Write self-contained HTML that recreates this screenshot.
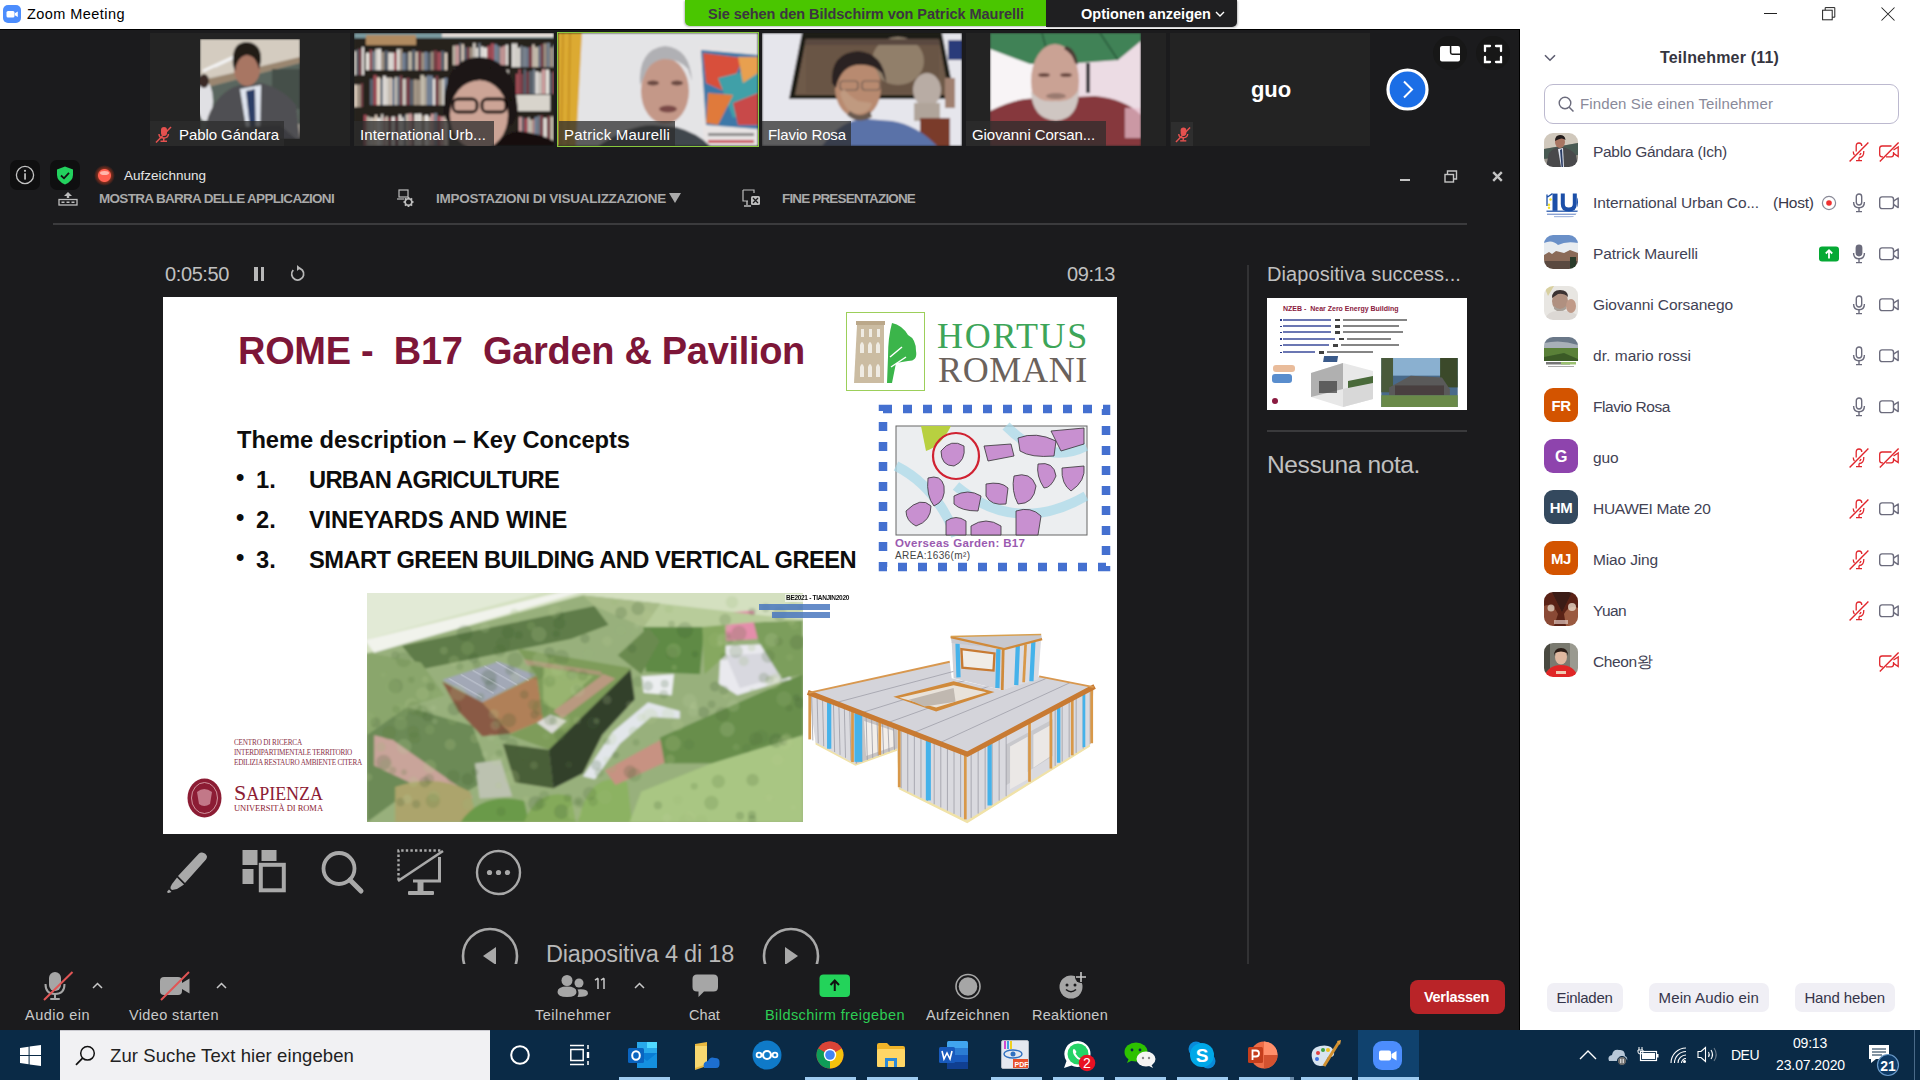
<!DOCTYPE html>
<html><head><meta charset="utf-8">
<style>
*{margin:0;padding:0;box-sizing:border-box}
html,body{width:1920px;height:1080px;overflow:hidden;background:#fff;font-family:"Liberation Sans",sans-serif;position:relative}
.a{position:absolute}
.t{position:absolute;white-space:nowrap;line-height:1}
svg{position:absolute;overflow:visible}
.lbl{position:absolute;height:25px;background:rgba(44,44,44,.74)}
.lt{position:absolute;white-space:nowrap;line-height:1;font-size:15px;color:#fff}
.pn{position:absolute;white-space:nowrap;line-height:1;font-size:15.5px;color:#424254}
.tb{position:absolute;white-space:nowrap;line-height:1;font-size:14.5px;color:#c9c9c9;text-align:center}
</style></head><body>
<!-- ============ TITLE BAR ============ -->
<div class="a" style="left:0;top:0;width:1920px;height:29px;background:#fff"></div>
<svg style="left:3px;top:5px" width="18" height="18" viewBox="0 0 18 18"><rect x="0" y="0" width="18" height="18" rx="5" fill="#4c8dfd"></rect><rect x="3.5" y="6" width="8" height="6.5" rx="1.5" fill="#fff"></rect><path d="M11.8 8.2 L14.8 6.4 V12.1 L11.8 10.3Z" fill="#fff"></path></svg>
<div class="t" style="left: 27px; top: 7px; font-size: 14.5px; color: rgb(0, 0, 0); letter-spacing: 0.443px;">Zoom Meeting</div>
<svg style="left:1764px;top:13px" width="14" height="2"><rect width="13" height="1" fill="#222"></rect></svg>
<svg style="left:1822px;top:7px" width="14" height="14" viewBox="0 0 14 14"><rect x="0.6" y="3.2" width="9.6" height="9.6" fill="none" stroke="#222" stroke-width="1"></rect><path d="M3.2 3.2 V0.6 H12.8 V10.2 H10.2" fill="none" stroke="#222" stroke-width="1"></path></svg>
<svg style="left:1881px;top:7px" width="14" height="14" viewBox="0 0 14 14"><path d="M0.5 0.5 L13.5 13.5 M13.5 0.5 L0.5 13.5" stroke="#222" stroke-width="1.05"></path></svg>

<!-- ============ DARK MEETING AREA ============ -->
<div class="a" style="left:0;top:29px;width:1520px;height:1001px;background:#1b1b1d"></div>
<div class="a" style="left:0;top:29px;width:1520px;height:1px;background:#000"></div>
<div class="a" style="left:1519px;top:29px;width:1px;height:1001px;background:#000"></div>
<!-- right panel -->
<div class="a" style="left:1520px;top:29px;width:400px;height:1001px;background:#fff"></div>

<!-- ============ BANNER ============ -->
<div class="a" style="left:685px;top:0;width:362px;height:26px;background:#4ac600;border-radius:0 0 0 5px;box-shadow:-1px 1px 2px rgba(0,0,0,.25)"></div>
<div class="t" style="left: 708px; top: 7px; font-size: 14.5px; font-weight: bold; color: rgb(60, 53, 65); letter-spacing: -0.033px;">Sie sehen den Bildschirm von Patrick Maurelli</div>
<div class="a" style="left:1046px;top:0;width:191px;height:27px;background:#1f1f21;border-radius:0 0 5px 0;box-shadow:1px 1px 2px rgba(0,0,0,.25)"></div>
<div class="t" style="left: 1081px; top: 7px; font-size: 14.5px; font-weight: bold; color: rgb(255, 255, 255); letter-spacing: 0.017px;">Optionen anzeigen</div>
<svg style="left:1215px;top:11px" width="10" height="6" viewBox="0 0 10 6"><path d="M1 1 L5 5 L9 1" fill="none" stroke="#fff" stroke-width="1.4"></path></svg>

<!-- ============ THUMBNAILS ============ -->
<!-- Pablo -->
<div class="a" style="left:150px;top:33px;width:200px;height:113px;background:#232323"></div>
<svg style="left:200px;top:39px" width="100" height="100" viewBox="0 0 100 100">
<defs><filter id="bl1" x="-10%" y="-10%" width="120%" height="120%"><feGaussianBlur stdDeviation="1.2"></feGaussianBlur></filter><clipPath id="c1"><rect width="100" height="100"></rect></clipPath></defs>
<g clip-path="url(#c1)" filter="url(#bl1)">
<rect width="100" height="100" fill="#c4bcb0"></rect>
<path d="M0 0 H100 V22 L0 40Z" fill="#d4ccc0"></path>
<path d="M3 32 L38 16" stroke="#f4f4f4" stroke-width="3"></path><path d="M15 28 L45 14" stroke="#eee" stroke-width="1.5"></path>
<path d="M0 42 L100 18 V24 L0 50Z" fill="#9a8670"></path>
<path d="M0 50 L100 24 V85 L0 95Z" fill="#5a665e"></path>
<rect x="72" y="30" width="28" height="40" fill="#44504a"></rect>
<ellipse cx="5" cy="62" rx="8" ry="20" fill="#e0e0e4"></ellipse><ellipse cx="4" cy="42" rx="5" ry="7" fill="#3a2c26"></ellipse>
<path d="M4 100 L8 78 Q18 52 40 46 L62 44 Q84 50 96 66 L100 100Z" fill="#505052"></path>
<path d="M40 50 L48 100 L60 100 L61 46Z" fill="#dfe4ee"></path>
<path d="M46 52 L51 100 L56 100 L55 50Z" fill="#2c3d66"></path>
<ellipse cx="47" cy="30" rx="13" ry="17" fill="#a87664"></ellipse>
<path d="M33 26 Q31 3 47 3 Q62 4 61 22 L59 30 Q56 16 46 16 Q37 18 35 32Z" fill="#221a18"></path>
<path d="M20 100 L35 88 L80 86 L96 100Z" fill="#3e3e42"></path>
</g></svg>
<div class="lbl" style="left:150px;top:121px;width:134px"></div>
<svg style="left:155px;top:126px" width="17" height="17" viewBox="0 0 17 17"><rect x="6" y="1" width="6" height="9" rx="3" fill="#e5514f"></rect><path d="M4 8 Q4 12 9 12 Q13 12 13.5 8" fill="none" stroke="#e5514f" stroke-width="1.5"></path><rect x="8" y="12" width="1.5" height="3" fill="#e5514f"></rect><rect x="5.5" y="14.5" width="6.5" height="1.5" fill="#e5514f"></rect><path d="M1 16.5 L16 1" stroke="#e5514f" stroke-width="1.5"></path></svg>
<div class="lt" style="left: 179px; top: 127px; letter-spacing: -0.07px;">Pablo Gándara</div>

<!-- International -->
<svg style="left:354px;top:33px" width="200" height="113" viewBox="0 0 200 113"><defs><filter id="bl2" x="-5%" y="-5%" width="110%" height="110%"><feGaussianBlur stdDeviation="0.9"></feGaussianBlur></filter><clipPath id="c2"><rect width="200" height="113"></rect></clipPath></defs><g clip-path="url(#c2)" filter="url(#bl2)"><rect width="200" height="113" fill="#26201d"></rect><rect x="0" y="0" width="200" height="5" fill="#7a9aa0"></rect><rect x="88" y="0" width="112" height="4" fill="#e8e0dc"></rect><rect x="12" y="2" width="50" height="10" fill="#b08a60"></rect><rect x="0.0" y="18.2" width="2.0" height="23.8" fill="#d8d2ca"></rect><rect x="2.3" y="16.5" width="2.3" height="25.5" fill="#5a6470"></rect><rect x="4.9" y="15.9" width="2.7" height="26.1" fill="#7a4048"></rect><rect x="7.9" y="14.1" width="2.0" height="27.9" fill="#f0ece8"></rect><rect x="12.0" y="19.7" width="3.5" height="17.3" fill="#e8e4de"></rect><rect x="15.8" y="16.8" width="2.0" height="20.2" fill="#a8505a"></rect><rect x="18.1" y="18.3" width="3.1" height="18.7" fill="#7a8490"></rect><rect x="21.5" y="16.1" width="2.3" height="20.9" fill="#e8e4de"></rect><rect x="24.1" y="15.8" width="2.8" height="21.2" fill="#f0ece8"></rect><rect x="27.2" y="19.0" width="2.9" height="18.0" fill="#a89a8a"></rect><rect x="30.5" y="17.7" width="3.5" height="19.3" fill="#5a6470"></rect><rect x="34.3" y="19.5" width="2.7" height="17.5" fill="#e8e4de"></rect><rect x="37.3" y="19.7" width="2.5" height="17.3" fill="#f0ece8"></rect><rect x="40.0" y="19.4" width="2.6" height="17.6" fill="#a8505a"></rect><rect x="42.9" y="16.2" width="2.8" height="20.8" fill="#e8e4de"></rect><rect x="46.0" y="15.9" width="2.1" height="21.1" fill="#a89a8a"></rect><rect x="48.4" y="20.0" width="2.7" height="17.0" fill="#7a8aa0"></rect><rect x="51.4" y="20.0" width="2.8" height="17.0" fill="#5a6470"></rect><rect x="54.5" y="18.7" width="3.2" height="18.3" fill="#c8c0b0"></rect><rect x="58.1" y="16.8" width="3.2" height="20.2" fill="#5a6470"></rect><rect x="61.6" y="18.8" width="2.1" height="18.2" fill="#e8d8c8"></rect><rect x="64.0" y="18.3" width="3.1" height="18.7" fill="#7a4048"></rect><rect x="67.4" y="19.6" width="2.7" height="17.4" fill="#a89a8a"></rect><rect x="70.4" y="19.0" width="2.7" height="18.0" fill="#7a8aa0"></rect><rect x="73.4" y="19.5" width="3.4" height="17.5" fill="#5a6470"></rect><rect x="77.1" y="18.6" width="2.4" height="18.4" fill="#a89a8a"></rect><rect x="79.8" y="17.4" width="3.1" height="19.6" fill="#7a4048"></rect><rect x="83.3" y="19.1" width="3.5" height="17.9" fill="#a8505a"></rect><rect x="87.0" y="18.1" width="3.4" height="18.9" fill="#5a6470"></rect><rect x="90.7" y="19.8" width="2.4" height="17.2" fill="#e8d8c8"></rect><rect x="99.0" y="12.7" width="2.2" height="19.3" fill="#c8c0b0"></rect><rect x="101.5" y="12.4" width="3.4" height="19.6" fill="#d0a0a0"></rect><rect x="105.3" y="10.1" width="1.9" height="21.9" fill="#5a6470"></rect><rect x="107.5" y="11.2" width="2.3" height="20.8" fill="#e8d8c8"></rect><rect x="110.1" y="14.2" width="2.6" height="17.8" fill="#5a6470"></rect><rect x="113.0" y="14.3" width="2.5" height="17.7" fill="#7a4048"></rect><rect x="115.8" y="14.3" width="2.9" height="17.7" fill="#a89a8a"></rect><rect x="119.1" y="10.1" width="2.5" height="21.9" fill="#d8d2ca"></rect><rect x="121.9" y="14.8" width="2.1" height="17.2" fill="#e8e4de"></rect><rect x="124.3" y="10.2" width="2.3" height="21.8" fill="#7a8490"></rect><rect x="126.9" y="13.6" width="2.7" height="18.4" fill="#f0ece8"></rect><rect x="129.8" y="14.6" width="3.1" height="17.4" fill="#f0ece8"></rect><rect x="133.2" y="12.9" width="3.1" height="19.1" fill="#a8505a"></rect><rect x="136.6" y="10.5" width="3.4" height="21.5" fill="#a8505a"></rect><rect x="140.3" y="11.3" width="2.7" height="20.7" fill="#7a8aa0"></rect><rect x="143.3" y="13.1" width="2.6" height="18.9" fill="#7a8490"></rect><rect x="146.2" y="14.2" width="2.6" height="17.8" fill="#d0a0a0"></rect><rect x="149.1" y="12.9" width="2.4" height="19.1" fill="#d0a0a0"></rect><rect x="151.8" y="11.7" width="2.2" height="20.3" fill="#e8e4de"></rect><rect x="158.0" y="10.5" width="2.2" height="23.5" fill="#f0ece8"></rect><rect x="160.5" y="10.5" width="2.7" height="23.5" fill="#e8e4de"></rect><rect x="163.5" y="14.6" width="2.5" height="19.4" fill="#e8e4de"></rect><rect x="166.3" y="12.7" width="2.2" height="21.3" fill="#7a8490"></rect><rect x="168.8" y="14.1" width="3.2" height="19.9" fill="#7a8490"></rect><rect x="172.3" y="14.6" width="2.2" height="19.4" fill="#7a8aa0"></rect><rect x="174.8" y="14.0" width="3.3" height="20.0" fill="#7a4048"></rect><rect x="178.4" y="11.4" width="2.1" height="22.6" fill="#e8d8c8"></rect><rect x="180.7" y="14.2" width="3.5" height="19.8" fill="#c8c0b0"></rect><rect x="184.6" y="13.0" width="2.0" height="21.0" fill="#7a8aa0"></rect><rect x="186.8" y="11.2" width="2.5" height="22.8" fill="#7a4048"></rect><rect x="189.6" y="10.4" width="2.7" height="23.6" fill="#a89a8a"></rect><rect x="192.6" y="10.0" width="3.3" height="24.0" fill="#7a8490"></rect><rect x="196.2" y="14.4" width="2.8" height="19.6" fill="#a89a8a"></rect><rect x="199.3" y="12.1" width="2.2" height="21.9" fill="#7a8490"></rect><rect x="0.0" y="51.7" width="2.9" height="22.3" fill="#e8d8c8"></rect><rect x="3.2" y="51.7" width="3.5" height="22.3" fill="#a89a8a"></rect><rect x="7.0" y="50.3" width="1.9" height="23.7" fill="#7a4048"></rect><rect x="16.0" y="46.1" width="3.2" height="25.9" fill="#5a6470"></rect><rect x="19.5" y="42.2" width="3.2" height="29.8" fill="#a8505a"></rect><rect x="23.0" y="44.4" width="3.0" height="27.6" fill="#e8d8c8"></rect><rect x="26.3" y="45.9" width="2.5" height="26.1" fill="#7a8490"></rect><rect x="29.1" y="43.0" width="2.7" height="29.0" fill="#f0ece8"></rect><rect x="32.0" y="44.7" width="3.4" height="27.3" fill="#d8d2ca"></rect><rect x="35.8" y="44.8" width="2.1" height="27.2" fill="#e8d8c8"></rect><rect x="38.2" y="46.0" width="2.3" height="26.0" fill="#7a8aa0"></rect><rect x="40.8" y="44.1" width="2.0" height="27.9" fill="#d8d2ca"></rect><rect x="43.1" y="44.0" width="2.5" height="28.0" fill="#7a8490"></rect><rect x="45.8" y="42.5" width="2.6" height="29.5" fill="#7a4048"></rect><rect x="48.7" y="46.0" width="3.1" height="26.0" fill="#d8d2ca"></rect><rect x="52.1" y="44.9" width="3.5" height="27.1" fill="#7a4048"></rect><rect x="55.9" y="46.6" width="3.3" height="25.4" fill="#5a6470"></rect><rect x="59.5" y="46.5" width="3.5" height="25.5" fill="#a89a8a"></rect><rect x="63.3" y="46.9" width="2.8" height="25.1" fill="#a89a8a"></rect><rect x="66.4" y="42.1" width="3.6" height="29.9" fill="#c8c0b0"></rect><rect x="70.3" y="44.1" width="2.2" height="27.9" fill="#c8c0b0"></rect><rect x="72.8" y="42.4" width="2.9" height="29.6" fill="#7a8aa0"></rect><rect x="76.0" y="42.6" width="2.7" height="29.4" fill="#7a8aa0"></rect><rect x="79.0" y="45.6" width="2.3" height="26.4" fill="#f0ece8"></rect><rect x="81.6" y="42.7" width="2.7" height="29.3" fill="#7a4048"></rect><rect x="84.6" y="46.4" width="3.3" height="25.6" fill="#a89a8a"></rect><rect x="88.2" y="45.9" width="1.8" height="26.1" fill="#e8e4de"></rect><rect x="90.3" y="44.8" width="3.0" height="27.2" fill="#7a8aa0"></rect><rect x="100.0" y="34.8" width="2.4" height="19.2" fill="#7a8aa0"></rect><rect x="102.7" y="38.1" width="1.9" height="15.9" fill="#d8d2ca"></rect><rect x="104.9" y="34.3" width="2.5" height="19.7" fill="#a89a8a"></rect><rect x="107.6" y="34.4" width="2.2" height="19.6" fill="#f0ece8"></rect><rect x="110.1" y="34.5" width="1.9" height="19.5" fill="#f0ece8"></rect><rect x="112.3" y="36.8" width="1.9" height="17.2" fill="#7a4048"></rect><rect x="114.5" y="36.9" width="2.9" height="17.1" fill="#e8e4de"></rect><rect x="117.8" y="36.0" width="2.8" height="18.0" fill="#7a4048"></rect><rect x="120.9" y="38.3" width="1.9" height="15.7" fill="#7a8490"></rect><rect x="123.1" y="36.7" width="2.6" height="17.3" fill="#d0a0a0"></rect><rect x="126.0" y="38.1" width="2.4" height="15.9" fill="#a8505a"></rect><rect x="128.6" y="36.9" width="2.0" height="17.1" fill="#7a4048"></rect><rect x="130.9" y="36.7" width="2.5" height="17.3" fill="#d8d2ca"></rect><rect x="133.7" y="37.1" width="2.8" height="16.9" fill="#5a6470"></rect><rect x="136.8" y="36.1" width="3.0" height="17.9" fill="#c8c0b0"></rect><rect x="140.1" y="38.6" width="2.6" height="15.4" fill="#c8c0b0"></rect><rect x="143.0" y="38.0" width="2.3" height="16.0" fill="#e8d8c8"></rect><rect x="145.7" y="34.4" width="3.2" height="19.6" fill="#7a8490"></rect><rect x="149.2" y="38.4" width="2.7" height="15.6" fill="#e8d8c8"></rect><rect x="152.2" y="37.0" width="2.6" height="17.0" fill="#d8d2ca"></rect><rect x="162.0" y="40.8" width="2.2" height="20.2" fill="#a8505a"></rect><rect x="164.5" y="36.2" width="2.1" height="24.8" fill="#a8505a"></rect><rect x="167.0" y="41.0" width="2.2" height="20.0" fill="#7a4048"></rect><rect x="169.5" y="36.2" width="2.5" height="24.8" fill="#5a6470"></rect><rect x="172.3" y="38.5" width="2.6" height="22.5" fill="#7a4048"></rect><rect x="175.2" y="38.0" width="3.4" height="23.0" fill="#5a6470"></rect><rect x="179.0" y="36.1" width="2.2" height="24.9" fill="#7a8490"></rect><rect x="181.5" y="38.4" width="2.7" height="22.6" fill="#f0ece8"></rect><rect x="184.5" y="39.3" width="3.1" height="21.7" fill="#d8d2ca"></rect><rect x="187.9" y="36.3" width="3.6" height="24.7" fill="#d0a0a0"></rect><rect x="191.8" y="36.5" width="3.3" height="24.5" fill="#e8e4de"></rect><rect x="195.4" y="39.5" width="2.4" height="21.5" fill="#5a6470"></rect><rect x="198.1" y="38.6" width="3.4" height="22.4" fill="#7a4048"></rect><rect x="162" y="62" width="34" height="16" fill="#d8d4cc"></rect><rect x="10.0" y="81.9" width="2.6" height="31.1" fill="#a8505a"></rect><rect x="12.9" y="83.4" width="2.1" height="29.6" fill="#c8c0b0"></rect><rect x="15.4" y="84.5" width="2.7" height="28.5" fill="#d8d2ca"></rect><rect x="18.4" y="84.7" width="2.4" height="28.3" fill="#e8d8c8"></rect><rect x="21.1" y="81.9" width="1.9" height="31.1" fill="#e8d8c8"></rect><rect x="23.2" y="84.8" width="3.5" height="28.2" fill="#f0ece8"></rect><rect x="27.1" y="81.2" width="2.1" height="31.8" fill="#d8d2ca"></rect><rect x="29.4" y="84.4" width="2.0" height="28.6" fill="#d0a0a0"></rect><rect x="31.8" y="83.4" width="1.9" height="29.6" fill="#e8d8c8"></rect><rect x="34.0" y="84.6" width="3.4" height="28.4" fill="#7a4048"></rect><rect x="37.7" y="83.6" width="3.0" height="29.4" fill="#f0ece8"></rect><rect x="41.0" y="83.9" width="3.4" height="29.1" fill="#7a4048"></rect><rect x="44.7" y="81.7" width="2.5" height="31.3" fill="#e8e4de"></rect><rect x="47.5" y="84.4" width="2.2" height="28.6" fill="#f0ece8"></rect><rect x="50.0" y="81.9" width="1.9" height="31.1" fill="#5a6470"></rect><rect x="52.2" y="81.2" width="2.1" height="31.8" fill="#e8d8c8"></rect><rect x="54.5" y="80.6" width="3.4" height="32.4" fill="#d0a0a0"></rect><rect x="58.3" y="83.8" width="1.8" height="29.2" fill="#7a4048"></rect><rect x="60.4" y="81.0" width="3.4" height="32.0" fill="#e8e4de"></rect><rect x="64.1" y="80.7" width="3.4" height="32.3" fill="#e8e4de"></rect><rect x="67.8" y="82.9" width="2.7" height="30.1" fill="#a89a8a"></rect><rect x="70.8" y="82.1" width="3.5" height="30.9" fill="#f0ece8"></rect><rect x="74.5" y="83.8" width="2.1" height="29.2" fill="#e8d8c8"></rect><rect x="77.0" y="80.9" width="2.8" height="32.1" fill="#d0a0a0"></rect><rect x="80.1" y="80.2" width="3.1" height="32.8" fill="#7a8490"></rect><rect x="83.5" y="83.0" width="2.8" height="30.0" fill="#a8505a"></rect><rect x="86.6" y="83.7" width="3.1" height="29.3" fill="#d0a0a0"></rect><rect x="90.1" y="80.6" width="3.6" height="32.4" fill="#e8d8c8"></rect><rect x="165.0" y="84.1" width="2.8" height="28.9" fill="#d0a0a0"></rect><rect x="168.1" y="84.3" width="1.8" height="28.7" fill="#5a6470"></rect><rect x="170.3" y="85.3" width="3.3" height="27.7" fill="#a8505a"></rect><rect x="173.8" y="84.5" width="1.9" height="28.5" fill="#d8d2ca"></rect><rect x="176.0" y="86.8" width="2.2" height="26.2" fill="#c8c0b0"></rect><rect x="178.5" y="86.3" width="1.9" height="26.7" fill="#d0a0a0"></rect><rect x="180.7" y="84.1" width="2.4" height="28.9" fill="#7a8aa0"></rect><rect x="183.5" y="82.9" width="2.3" height="30.1" fill="#7a8490"></rect><rect x="186.0" y="82.7" width="3.0" height="30.3" fill="#7a4048"></rect><rect x="189.3" y="85.1" width="3.5" height="27.9" fill="#e8e4de"></rect><rect x="193.2" y="83.2" width="2.8" height="29.8" fill="#7a4048"></rect><rect x="196.3" y="83.5" width="3.5" height="29.5" fill="#c8c0b0"></rect><path d="M90 82 Q88 25 125 24 Q162 25 164 80 L158 92 L94 92Z" fill="#1a1412"></path><ellipse cx="125" cy="82" rx="29" ry="35" fill="#cca496"></ellipse><path d="M94 70 Q96 34 125 33 Q156 34 158 70 Q148 48 126 47 Q104 49 94 70Z" fill="#1a1412"></path><rect x="99" y="66" width="24" height="13" rx="5" fill="none" stroke="#140c0c" stroke-width="2.8"></rect><rect x="128" y="66" width="24" height="13" rx="5" fill="none" stroke="#140c0c" stroke-width="2.8"></rect><path d="M140 113 Q150 100 165 98 Q185 100 200 108 V113Z" fill="#141010"></path></g></svg>
<div class="lbl" style="left:354px;top:121px;width:140px"></div>
<div class="lt" style="left: 360px; top: 127px; letter-spacing: 0.13px;">International Urb...</div>

<!-- Patrick -->
<svg style="left:558px;top:33px" width="200" height="113" viewBox="0 0 200 113">
<defs><filter id="bl3" x="-5%" y="-5%" width="110%" height="110%"><feGaussianBlur stdDeviation="1"></feGaussianBlur></filter><clipPath id="c3"><rect width="200" height="113"></rect></clipPath></defs>
<g clip-path="url(#c3)" filter="url(#bl3)">
<rect width="200" height="113" fill="#e4e4e6"></rect>
<path d="M0 0 H24 L18 113 H0Z" fill="#dcaa30"></path>
<path d="M5 0 L3 113 M12 0 L10 113" stroke="#c08a20" stroke-width="1.5"></path>
<path d="M141 14 L200 20 V113 H146Z" fill="#e8e4e4"></path>
<path d="M143 17 L200 22 V96 L148 92Z" fill="#3c78a8"></path>
<path d="M145 20 L185 25 L170 60 L148 50Z" fill="#d8503a"></path>
<path d="M160 45 L200 35 V75 L175 85Z" fill="#40a0a8"></path>
<path d="M150 60 L175 62 L160 92 L148 90Z" fill="#e07a3a"></path>
<path d="M180 24 L200 24 V40 L185 50Z" fill="#e8a050"></path>
<path d="M175 70 L200 60 V92 L180 92Z" fill="#c84a48"></path>
<rect x="150" y="100" width="46" height="3" fill="#888"></rect>
<rect x="150" y="107" width="46" height="3" fill="#c84050"></rect>
<path d="M40 113 Q70 92 95 92 L118 94 Q140 100 152 113Z" fill="#40464e"></path>
<ellipse cx="107" cy="58" rx="24" ry="33" fill="#c49888"></ellipse>
<path d="M82 52 Q80 16 107 13 Q132 15 134 48 L130 36 Q120 25 105 26 Q90 29 86 44Z" fill="#b0b0b4"></path>
<ellipse cx="95" cy="50" rx="6" ry="2.5" fill="#6a4a42"></ellipse><ellipse cx="119" cy="50" rx="6" ry="2.5" fill="#6a4a42"></ellipse>
<ellipse cx="110" cy="76" rx="9" ry="3.5" fill="#7a4a46"></ellipse>
</g></svg>
<div class="a" style="left:557px;top:32px;width:202px;height:115px;border:1.5px solid #88c93e"></div>
<div class="lbl" style="left:559px;top:121px;width:116px"></div>
<div class="lt" style="left: 564px; top: 127px; letter-spacing: 0.217px;">Patrick Maurelli</div>

<!-- Flavio -->
<svg style="left:762px;top:33px" width="200" height="113" viewBox="0 0 200 113">
<defs><filter id="bl4" x="-5%" y="-5%" width="110%" height="110%"><feGaussianBlur stdDeviation="1"></feGaussianBlur></filter><clipPath id="c4"><rect width="200" height="113"></rect></clipPath></defs>
<g clip-path="url(#c4)" filter="url(#bl4)">
<rect width="200" height="113" fill="#e6e6ec"></rect>
<path d="M40 0 H180 L193 66 H27Z" fill="#1e1a18"></path>
<path d="M44 6 H177 L187 62 H33Z" fill="#6e5a4a"></path>
<ellipse cx="136" cy="28" rx="26" ry="24" fill="#b0a088" opacity=".8"></ellipse><rect x="44" y="10" width="133" height="50" fill="#5a4636" opacity=".25"></rect>
<path d="M44 6 H177 L178 12 H43Z" fill="#5a4a40"></path>
<rect x="186" y="7" width="14" height="20" fill="#2a3a7a"></rect>
<rect x="183" y="45" width="10" height="30" fill="#a08070"></rect>
<ellipse cx="165" cy="57" rx="14" ry="17" fill="#b8aca4"></ellipse>
<rect x="152" y="70" width="26" height="18" fill="#b0a49a"></rect>
<rect x="158" y="85" width="30" height="28" fill="#7a3a2a"></rect>
<path d="M60 113 Q80 85 105 86 L130 88 Q155 92 175 113Z" fill="#5a72a8"></path>
<ellipse cx="96" cy="55" rx="23" ry="30" fill="#b88a70"></ellipse>
<path d="M70 50 Q68 20 96 18 Q122 20 124 50 L120 40 Q110 30 94 32 Q78 35 74 55Z" fill="#2a2220"></path>
<rect x="78" y="48" width="18" height="9" rx="3" fill="none" stroke="#6a5a50" stroke-width="1.2"></rect>
<rect x="100" y="48" width="18" height="9" rx="3" fill="none" stroke="#6a5a50" stroke-width="1.2"></rect>
<path d="M78 60 Q85 85 100 80 Q108 78 110 70 L96 68 Q86 62 82 56Z" fill="#c09a80"></path>
<path d="M85 82 Q96 92 110 84 L108 78 Q98 86 88 78Z" fill="#6a5a50"></path>
</g></svg>
<div class="lbl" style="left:762px;top:121px;width:89px"></div>
<div class="lt" style="left: 768px; top: 127px; letter-spacing: -0.109px;">Flavio Rosa</div>

<!-- Giovanni -->
<div class="a" style="left:966px;top:33px;width:200px;height:113px;background:#232323"></div>
<svg style="left:990px;top:33px" width="151" height="113" viewBox="0 0 151 113">
<defs><filter id="bl5" x="-5%" y="-5%" width="110%" height="110%"><feGaussianBlur stdDeviation="1"></feGaussianBlur></filter><clipPath id="c5"><rect width="151" height="113"></rect></clipPath></defs>
<g clip-path="url(#c5)" filter="url(#bl5)">
<rect width="151" height="113" fill="#ecdce4"></rect>
<rect x="0" y="15" width="60" height="70" fill="#f8f4f6"></rect>
<path d="M0 0 H151 V8 L128 27 L75 31 L40 31 L0 16Z" fill="#3f8256"></path>
<path d="M52 0 L60 30" stroke="#2a5a3a" stroke-width="1.5"></path><path d="M110 0 L128 27" stroke="#2a5a3a" stroke-width="1.5"></path>
<rect x="96" y="30" width="4" height="30" fill="#2a2a30"></rect>
<path d="M0 113 V78 Q30 63 50 66 L105 63 Q135 66 151 82 V113Z" fill="#86393c"></path>
<ellipse cx="65" cy="48" rx="24" ry="37" fill="#caa294"></ellipse>
<path d="M76 13 Q86 16 88 32 L85 30 Q82 20 74 16Z" fill="#4a3a34"></path>
<path d="M41 58 Q42 86 66 88 Q89 86 89 56 Q82 70 66 68 Q49 70 41 58Z" fill="#cfc6c2"></path><ellipse cx="66" cy="63" rx="10" ry="3" fill="#9a7a70"></ellipse>
<ellipse cx="54" cy="42" rx="6" ry="2" fill="#6a4a40"></ellipse><ellipse cx="76" cy="42" rx="6" ry="2" fill="#6a4a40"></ellipse>
<rect x="135" y="75" width="16" height="30" fill="#e8c0d0" opacity=".7"></rect>
</g></svg>
<div class="lbl" style="left:966px;top:121px;width:140px"></div>
<div class="lt" style="left: 972px; top: 127px; letter-spacing: -0.069px;">Giovanni Corsan...</div>

<!-- guo -->
<div class="a" style="left:1170px;top:33px;width:200px;height:113px;background:#232323"></div>
<div class="t" style="left: 1251px; top: 79px; font-size: 22px; font-weight: bold; color: rgb(255, 255, 255); letter-spacing: -0.109px;">guo</div>
<div class="a" style="left:1171px;top:122px;width:22px;height:24px;background:#2e2e2e"></div>
<svg style="left:1175px;top:126px" width="16" height="17" viewBox="0 0 17 17"><rect x="6" y="1" width="6" height="9" rx="3" fill="#e5514f"></rect><path d="M4 8 Q4 12 9 12 Q13 12 13.5 8" fill="none" stroke="#e5514f" stroke-width="1.5"></path><rect x="8" y="12" width="1.5" height="3" fill="#e5514f"></rect><rect x="5.5" y="14.5" width="6.5" height="1.5" fill="#e5514f"></rect><path d="M1 16.5 L16 1" stroke="#e5514f" stroke-width="1.5"></path></svg>

<!-- next arrow & view icons -->
<svg style="left:1386px;top:68px" width="43" height="43" viewBox="0 0 43 43"><circle cx="21.5" cy="21.5" r="19.5" fill="#1b6ee6" stroke="#fff" stroke-width="3.2"></circle><path d="M18 13.5 L26 21.5 L18 29.5" fill="none" stroke="#fff" stroke-width="2"></path></svg>
<svg style="left:1430px;top:36px" width="80" height="36" viewBox="0 0 80 36"><circle cx="20" cy="17" r="17" fill="#171717"></circle><circle cx="63" cy="17" r="17" fill="#171717"></circle>
<rect x="10" y="10" width="20" height="15.5" rx="2" fill="#fff"></rect><path d="M20.6 9.5 V16.5 Q20.6 18.2 22.3 18.2 H30.5" fill="none" stroke="#171717" stroke-width="1.5"></path>
<path d="M55 15 V10 H60 M66 10 H71 V15 M71 21 V26 H66 M60 26 H55 V21" fill="none" stroke="#fff" stroke-width="2.3" stroke-linecap="round"></path></svg>

<!-- ============ PRESENTER VIEW ============ -->
<div class="a" style="left:10px;top:160px;width:30px;height:30px;background:#0f0f10;border-radius:7px"></div>
<svg style="left:15px;top:165px" width="20" height="20" viewBox="0 0 20 20"><circle cx="10" cy="10" r="8.6" fill="none" stroke="#c4c4c4" stroke-width="1.3"></circle><rect x="9.2" y="8.3" width="1.7" height="6.3" fill="#c4c4c4"></rect><circle cx="10" cy="5.8" r="1.1" fill="#c4c4c4"></circle></svg>
<div class="a" style="left:50px;top:160px;width:30px;height:30px;background:#0f0f10;border-radius:7px"></div>
<svg style="left:56px;top:166px" width="18" height="19" viewBox="0 0 18 19"><path d="M9 0.5 L17 3.5 V9 Q17 15 9 18.5 Q1 15 1 9 V3.5Z" fill="#23d15e"></path><path d="M5 9.5 L8 12.3 L13 6.8" fill="none" stroke="#111" stroke-width="1.8"></path></svg>
<div class="a" style="left:94px;top:165px;width:21px;height:21px;border-radius:50%;background:radial-gradient(circle,#ff6050 0 6px,rgba(200,60,30,.55) 7px,rgba(120,40,20,0) 10.5px)"></div>
<div class="a" style="left:100px;top:171px;width:9px;height:4px;border-radius:50%;background:rgba(255,220,210,.7)"></div>
<div class="t" style="left: 124px; top: 169px; font-size: 13.5px; color: rgb(230, 230, 230); letter-spacing: 0.016px;">Aufzeichnung</div>

<svg style="left:58px;top:192px" width="20" height="14" viewBox="0 0 20 14"><path d="M10 0 L14 4 H11.2 V6 H8.8 V4 H6Z" fill="#bdbdbd"></path><rect x="1" y="7.5" width="18" height="5.5" fill="none" stroke="#bdbdbd" stroke-width="1.3"></rect><rect x="3.5" y="9.5" width="3" height="1.5" fill="#bdbdbd"></rect><rect x="8.5" y="9.5" width="3" height="1.5" fill="#bdbdbd"></rect><rect x="13.5" y="9.5" width="3" height="1.5" fill="#bdbdbd"></rect></svg>
<div class="t" style="left: 99px; top: 192px; font-size: 13.5px; font-weight: bold; color: rgb(169, 169, 169); letter-spacing: -0.694px;">MOSTRA BARRA DELLE APPLICAZIONI</div>
<svg style="left:396px;top:189px" width="19" height="19" viewBox="0 0 19 19"><rect x="3" y="1" width="9" height="7" fill="none" stroke="#bdbdbd" stroke-width="1.2"></rect><path d="M1 10 H8" stroke="#bdbdbd" stroke-width="1.2"></path><circle cx="12.5" cy="13" r="3.3" fill="none" stroke="#bdbdbd" stroke-width="1.6"></circle><rect x="11.6" y="8" width="1.8" height="2.2" fill="#bdbdbd" transform="rotate(0 12.5 13)"></rect><rect x="11.6" y="8" width="1.8" height="2.2" fill="#bdbdbd" transform="rotate(45 12.5 13)"></rect><rect x="11.6" y="8" width="1.8" height="2.2" fill="#bdbdbd" transform="rotate(90 12.5 13)"></rect><rect x="11.6" y="8" width="1.8" height="2.2" fill="#bdbdbd" transform="rotate(135 12.5 13)"></rect><rect x="11.6" y="8" width="1.8" height="2.2" fill="#bdbdbd" transform="rotate(180 12.5 13)"></rect><rect x="11.6" y="8" width="1.8" height="2.2" fill="#bdbdbd" transform="rotate(225 12.5 13)"></rect><rect x="11.6" y="8" width="1.8" height="2.2" fill="#bdbdbd" transform="rotate(270 12.5 13)"></rect><rect x="11.6" y="8" width="1.8" height="2.2" fill="#bdbdbd" transform="rotate(315 12.5 13)"></rect></svg>
<div class="t" style="left: 436px; top: 192px; font-size: 13.5px; font-weight: bold; color: rgb(169, 169, 169); letter-spacing: -0.266px;">IMPOSTAZIONI DI VISUALIZZAZIONE</div>
<svg style="left:669px;top:193px" width="12" height="10" viewBox="0 0 12 10"><path d="M0 0 H12 L6 10Z" fill="#a9a9a9"></path></svg>
<svg style="left:742px;top:189px" width="19" height="19" viewBox="0 0 19 19"><path d="M1 1 H12 V4 M1 1 V12 H6" fill="none" stroke="#bdbdbd" stroke-width="1.2"></path><path d="M5 12 V16 M2 17 H9" stroke="#bdbdbd" stroke-width="1.4"></path><rect x="9" y="7" width="9" height="9" rx="1.5" fill="#bdbdbd"></rect><path d="M11 9 L16 14 M16 9 L11 14" stroke="#1b1b1d" stroke-width="1.3"></path></svg>
<div class="t" style="left: 782px; top: 192px; font-size: 13.5px; font-weight: bold; color: rgb(169, 169, 169); letter-spacing: -0.848px;">FINE PRESENTAZIONE</div>
<div class="a" style="left:1400px;top:179px;width:10px;height:2px;background:#c4c4c4"></div>
<svg style="left:1444px;top:170px" width="14" height="13" viewBox="0 0 14 13"><rect x="1" y="4.5" width="8.5" height="7.5" fill="none" stroke="#c4c4c4" stroke-width="1.4"></rect><path d="M3.5 4.5 V1 H12.5 V9 H9.5" fill="none" stroke="#c4c4c4" stroke-width="1.4"></path></svg>
<svg style="left:1492px;top:171px" width="11" height="11" viewBox="0 0 11 11"><path d="M1.2 1.2 L9.8 9.8 M9.8 1.2 L1.2 9.8" stroke="#c4c4c4" stroke-width="2.4"></path></svg>
<div class="a" style="left:53px;top:223px;width:1414px;height:2px;background:#3b3b3d"></div>

<div class="t" style="left: 165px; top: 264px; font-size: 20px; color: rgb(192, 192, 192); letter-spacing: -0.391px;">0:05:50</div>
<div class="a" style="left:254px;top:267px;width:3.5px;height:14px;background:#b8b8b8"></div>
<div class="a" style="left:260.5px;top:267px;width:3.5px;height:14px;background:#b8b8b8"></div>
<svg style="left:289px;top:265px" width="17" height="17" viewBox="0 0 17 17"><path d="M4.2 5 A6 6 0 1 0 8.5 3" fill="none" stroke="#b8b8b8" stroke-width="1.8"></path><path d="M8 0 L11.5 3 L8 6Z" fill="#b8b8b8"></path></svg>
<div class="t" style="left: 1067px; top: 264px; font-size: 20px; color: rgb(192, 192, 192); letter-spacing: -0.412px;">09:13</div>
<div class="t" style="left: 1267px; top: 264px; font-size: 20px; color: rgb(192, 192, 192); letter-spacing: 0.077px;">Diapositiva success...</div>
<div class="a" style="left:1247px;top:265px;width:2px;height:699px;background:#323234"></div>

<!-- ============ SLIDE ============ -->
<div class="a" style="left:163px;top:297px;width:954px;height:537px;background:#fff;overflow:hidden">
<div class="t" style="left: 75px; top: 35px; font-size: 38px; font-weight: bold; color: rgb(125, 22, 56); letter-spacing: -0.316px;">ROME -&nbsp; B17&nbsp; Garden &amp; Pavilion</div>
<div class="t" style="left: 74px; top: 132px; font-size: 23.7px; font-weight: bold; color: rgb(13, 13, 13); letter-spacing: -0.06px;">Theme description – Key Concepts</div>
<div class="t" style="left:73px;top:170px;font-size:23.7px;font-weight:bold;color:#0d0d0d">•</div>
<div class="t" style="left: 93px; top: 172px; font-size: 23.7px; font-weight: bold; color: rgb(13, 13, 13); letter-spacing: 0.117px;">1.</div>
<div class="t" style="left: 146px; top: 172px; font-size: 23.7px; font-weight: bold; color: rgb(13, 13, 13); letter-spacing: -0.698px;">URBAN AGRICULTURE</div>
<div class="t" style="left:73px;top:210px;font-size:23.7px;font-weight:bold;color:#0d0d0d">•</div>
<div class="t" style="left: 93px; top: 212px; font-size: 23.7px; font-weight: bold; color: rgb(13, 13, 13); letter-spacing: 0.117px;">2.</div>
<div class="t" style="left: 146px; top: 212px; font-size: 23.7px; font-weight: bold; color: rgb(13, 13, 13); letter-spacing: -0.194px;">VINEYARDS AND WINE</div>
<div class="t" style="left:73px;top:250px;font-size:23.7px;font-weight:bold;color:#0d0d0d">•</div>
<div class="t" style="left: 93px; top: 252px; font-size: 23.7px; font-weight: bold; color: rgb(13, 13, 13); letter-spacing: 0.117px;">3.</div>
<div class="t" style="left: 146px; top: 252px; font-size: 23.7px; font-weight: bold; color: rgb(13, 13, 13); letter-spacing: -0.552px;">SMART GREEN BUILDING AND VERTICAL GREEN</div>

<!-- Hortus Romani logo -->
<div class="a" style="left:683px;top:15px;width:79px;height:79px;border:1.5px solid #9ccf5a"></div>
<svg style="left:689px;top:20px" width="70" height="68" viewBox="0 0 70 68">
<path d="M2 66 L5 8 H32 V66Z" fill="#cbbca2"></path><rect x="4" y="4" width="29" height="4" fill="#bba88a"></rect>
<g fill="#fff" opacity=".7"><path d="M8 28 Q10 22 12 28 V36 H8Z"></path><path d="M16 28 Q18 22 20 28 V36 H16Z"></path><path d="M24 28 Q26 22 28 28 V36 H24Z"></path><path d="M8 50 Q10 44 12 50 V60 H8Z"></path><path d="M16 50 Q18 44 20 50 V60 H16Z"></path><path d="M24 50 Q26 44 28 50 V60 H24Z"></path><rect x="9" y="12" width="3" height="8"></rect><rect x="17" y="12" width="3" height="8"></rect><rect x="25" y="12" width="3" height="8"></rect></g>
<path d="M35 66 L36 40 Q36 20 40 6 Q50 8 56 18 Q64 22 64 34 Q66 44 56 44 L44 46 L40 66Z" fill="#3bb54a"></path>
<path d="M38 40 L50 30 M39 50 L54 40" stroke="#fff" stroke-width="1.5"></path>
</svg>
<div class="t" style="left: 774px; top: 21px; font-size: 36px; font-family: &quot;Liberation Serif&quot;, serif; color: rgb(61, 165, 88); letter-spacing: 1.69px;">HORTUS</div>
<div class="t" style="left: 775px; top: 55px; font-size: 36px; font-family: &quot;Liberation Serif&quot;, serif; color: rgb(107, 98, 92); letter-spacing: 0.664px;">ROMANI</div>

<!-- map inset -->
<svg style="left:714px;top:107px" width="235" height="170" viewBox="0 0 235 170">
<rect x="6" y="5" width="223" height="158" fill="none" stroke="#4470d0" stroke-width="8.5" stroke-dasharray="9 11"></rect>
<defs><filter id="blm"><feGaussianBlur stdDeviation="0.5"></feGaussianBlur></filter></defs>
<g transform="translate(19,22)" filter="url(#blm)">
<rect width="191" height="109" fill="#eceef0" stroke="#666" stroke-width="1"></rect>
<path d="M25 0 L55 0 Q45 20 30 25Z" fill="#b8d040"></path>
<path d="M0 40 Q40 60 60 110 M60 60 Q120 110 190 70 M110 0 Q150 40 190 20" fill="none" stroke="#a8d8e8" stroke-width="10" opacity=".7"></path>
<g fill="#c890d0" stroke="#333" stroke-width=".8">
<path d="M45 25 Q55 12 68 20 Q70 35 58 40 Q45 40 45 25Z"></path>
<path d="M88 20 L115 18 L118 30 L92 35Z"></path>
<path d="M122 12 Q140 5 160 15 L158 30 Q135 32 124 25Z"></path>
<path d="M155 5 L188 2 L188 18 L165 25Z"></path>
<path d="M142 38 Q158 35 160 50 Q155 62 148 62 Q140 50 142 38Z"></path>
<path d="M166 42 L188 40 Q190 55 175 65 Q165 58 166 42Z"></path>
<path d="M32 52 Q45 48 48 60 Q50 75 38 80 Q30 70 32 52Z"></path>
<path d="M58 70 Q72 62 85 70 L82 85 Q65 85 58 78Z"></path>
<path d="M90 58 Q105 55 112 62 L110 78 Q95 80 90 70Z"></path>
<path d="M118 50 Q135 45 140 60 Q138 78 122 78 Q115 65 118 50Z"></path>
<path d="M10 85 Q25 70 35 80 Q35 95 20 100 Q10 95 10 85Z"></path>
<path d="M50 95 Q60 88 70 95 V109 H50Z"></path>
<path d="M75 100 Q90 90 105 100 V109 H75Z"></path>
<path d="M120 85 Q135 80 145 90 L142 109 H120Z"></path>
</g>
<circle cx="60" cy="30" r="23" fill="none" stroke="#d02030" stroke-width="2.2"></circle>
</g>
<text x="18" y="143" font-family="Liberation Sans" font-weight="bold" font-size="11.5" fill="#9a5ab0" textLength="130">Overseas Garden: B17</text>
<text x="18" y="155" font-family="Liberation Sans" font-size="10" fill="#444" textLength="75">AREA:1636(m²)</text>
</svg>

<!-- garden render -->
<svg style="left:204px;top:296px" width="436" height="229" viewBox="30 35 1860 975" preserveAspectRatio="none">
<defs><filter id="blg" x="-2%" y="-2%" width="104%" height="104%"><feGaussianBlur stdDeviation="5"></feGaussianBlur></filter><clipPath id="cg"><rect x="30" y="35" width="1860" height="975"></rect></clipPath></defs>
<g clip-path="url(#cg)"><g filter="url(#blg)">
<rect x="0" y="0" width="1900" height="1020" fill="#98b07c"></rect>
<path d="M0 0 L1900 0 L1900 220 L1280 80 L950 45 L0 300Z" fill="#d4e0c0" opacity="1"></path>
<path d="M0 0 L900 0 L0 240Z" fill="#e2ead6" opacity="1"></path>
<path d="M20 235 L900 20 L980 20 L60 290Z" fill="#f1f3ec" opacity="1"></path>
<path d="M180 260 L1000 90 L1060 170 L900 230 L260 360Z" fill="#5e7c48" opacity="1"></path>
<path d="M30 290 L260 330 L360 470 L200 520 L30 640Z" fill="#8aa66c" opacity="1"></path>
<path d="M30 640 L200 520 L480 600 L560 820 L420 900 L180 900 L30 1010Z" fill="#6c8a56" opacity="1"></path>
<path d="M60 640 L140 660 L480 900 L460 960 L60 770Z" fill="#c9a49a" opacity="1"></path>
<path d="M150 860 Q320 800 470 880 L500 1010 L150 1010Z" fill="#aca46c" opacity="1"></path>
<path d="M430 1010 Q520 880 700 920 L720 1010Z" fill="#6a9a48" opacity="1"></path>
<path d="M700 1010 Q760 860 900 900 L920 1010Z" fill="#84aa5a" opacity="1"></path>
<path d="M930 1010 Q980 780 1140 840 L1160 1010Z" fill="#8cb262" opacity="1"></path>
<path d="M490 760 L600 745 L650 900 L510 910Z" fill="#bcc2b0" opacity="1"></path>
<path d="M351 405 L591 327 L749 383 L522 500Z" fill="#a2a8b6" opacity="1"></path>
<path d="M351 412 L522 500 L642 633 L522 645 L420 538Z" fill="#8a5a44" opacity="1"></path>
<path d="M522 500 L755 387 L781 576 L642 633Z" fill="#b08058" opacity="1"></path>
<path d="M673 273 L1160 355 L812 702 L635 639 L781 576 L755 387Z" fill="#7e9c5a" opacity="1"></path>
<path d="M781 349 L996 387 L838 532 L781 506Z" fill="#98b470" opacity="1"></path>
<path d="M825 538 L1040 380 L1090 399 L863 569Z" fill="#c8988a" opacity="0.8"></path>
<path d="M698 317 L1027 368 L1040 387 L711 342Z" fill="#c8988a" opacity="0.6"></path>
<path d="M755 588 L812 551 L882 579 L819 633Z" fill="#dcdcd8" opacity="1"></path>
<path d="M610 677 L806 702 L825 866 L661 841Z" fill="#4a5e38" opacity="1"></path>
<path d="M806 702 L1154 361 L1172 487 L1033 639 L951 803 L825 866Z" fill="#33402c" opacity="1"></path>
<path d="M951 815 L1078 626 L1229 500 L1365 538 L1365 569 L1242 563 L1109 677 L1002 828Z" fill="#e2e6ea" opacity="1"></path>
<path d="M1046 790 L1365 614 L1560 600 L1560 660 L1365 727 L1090 853Z" fill="#c79282" opacity="1"></path>
<path d="M1150 1010 L1890 1010 L1890 640 L1500 760 L1200 880Z" fill="#a9c683" opacity="1"></path>
<path d="M1280 650 L1890 380 L1890 640 L1500 760 L1300 760Z" fill="#688e4c" opacity="1"></path>
<path d="M1210 180 L1470 170 L1450 380 L1220 370Z" fill="#5e8a44" opacity="1"></path>
<path d="M1200 390 L1340 380 L1330 470 L1210 460Z" fill="#eceef0" opacity="1"></path>
<path d="M1540 260 L1780 250 L1840 400 L1610 470 L1530 420Z" fill="#e9e9ee" opacity="1"></path>
<path d="M1560 300 L1760 290 L1800 390 L1620 440Z" fill="#c8c8d0" opacity="0.5"></path>
<path d="M1540 120 L1680 110 L1700 230 L1560 240Z" fill="#e48eab" opacity="1"></path>
<path d="M1460 180 L1560 150 L1560 300 L1470 380Z" fill="#86a860" opacity="1"></path>
<path d="M1680 160 L1890 150 L1890 380 L1800 400 L1700 240Z" fill="#7c9e5c" opacity="1"></path>
<path d="M1280 80 L1890 150 L1680 160 L1460 180 L1210 180Z" fill="#b8cc9a" opacity="1"></path>
<path d="M1100 300 L1230 180 L1280 240 L1200 380Z" fill="#6a8a50" opacity="1"></path>
<path d="M950 45 L1280 80 L1210 180 L1000 90Z" fill="#a8bc88" opacity="1"></path>
<circle cx="632" cy="203" r="26" fill="#3e5a30" opacity="0.2"></circle>
<circle cx="1558" cy="149" r="25" fill="#4a6a38" opacity="0.2"></circle>
<circle cx="808" cy="289" r="24" fill="#3e5a30" opacity="0.2"></circle>
<circle cx="1568" cy="178" r="17" fill="#c0d0a0" opacity="0.2"></circle>
<circle cx="1114" cy="119" r="25" fill="#3e5a30" opacity="0.2"></circle>
<circle cx="1846" cy="104" r="31" fill="#9cb878" opacity="0.2"></circle>
<circle cx="810" cy="574" r="25" fill="#4a6a38" opacity="0.2"></circle>
<circle cx="1548" cy="232" r="25" fill="#c0d0a0" opacity="0.2"></circle>
<circle cx="1355" cy="596" r="26" fill="#b8cc90" opacity="0.2"></circle>
<circle cx="1296" cy="466" r="19" fill="#4a6a38" opacity="0.2"></circle>
<circle cx="1748" cy="404" r="17" fill="#56783e" opacity="0.2"></circle>
<circle cx="1330" cy="292" r="25" fill="#4a6a38" opacity="0.2"></circle>
<circle cx="951" cy="386" r="22" fill="#4a6a38" opacity="0.2"></circle>
<circle cx="1853" cy="172" r="21" fill="#9cb878" opacity="0.2"></circle>
<circle cx="313" cy="525" r="13" fill="#c0d0a0" opacity="0.2"></circle>
<circle cx="174" cy="590" r="29" fill="#9cb878" opacity="0.2"></circle>
<circle cx="663" cy="393" r="23" fill="#b8cc90" opacity="0.2"></circle>
<circle cx="532" cy="722" r="13" fill="#c0d0a0" opacity="0.2"></circle>
<circle cx="1335" cy="675" r="34" fill="#b8cc90" opacity="0.2"></circle>
<circle cx="559" cy="427" r="27" fill="#3e5a30" opacity="0.2"></circle>
<circle cx="1780" cy="398" r="25" fill="#b8cc90" opacity="0.2"></circle>
<circle cx="140" cy="790" r="15" fill="#56783e" opacity="0.2"></circle>
<circle cx="770" cy="931" r="23" fill="#56783e" opacity="0.2"></circle>
<circle cx="865" cy="582" r="31" fill="#b8cc90" opacity="0.2"></circle>
<circle cx="1637" cy="325" r="21" fill="#9cb878" opacity="0.2"></circle>
<circle cx="1300" cy="421" r="17" fill="#3e5a30" opacity="0.2"></circle>
<circle cx="358" cy="280" r="17" fill="#b8cc90" opacity="0.2"></circle>
<circle cx="1576" cy="233" r="18" fill="#56783e" opacity="0.2"></circle>
<circle cx="809" cy="411" r="24" fill="#56783e" opacity="0.2"></circle>
<circle cx="1314" cy="550" r="26" fill="#c0d0a0" opacity="0.2"></circle>
<circle cx="1406" cy="494" r="31" fill="#c0d0a0" opacity="0.2"></circle>
<circle cx="1514" cy="433" r="21" fill="#3e5a30" opacity="0.2"></circle>
<circle cx="926" cy="440" r="16" fill="#56783e" opacity="0.2"></circle>
<circle cx="850" cy="164" r="25" fill="#3e5a30" opacity="0.2"></circle>
<circle cx="219" cy="405" r="13" fill="#56783e" opacity="0.2"></circle>
<circle cx="1172" cy="201" r="18" fill="#9cb878" opacity="0.2"></circle>
<circle cx="1150" cy="510" r="15" fill="#b8cc90" opacity="0.2"></circle>
<circle cx="1877" cy="503" r="23" fill="#3e5a30" opacity="0.2"></circle>
<circle cx="298" cy="772" r="28" fill="#b8cc90" opacity="0.2"></circle>
<circle cx="1572" cy="213" r="13" fill="#4a6a38" opacity="0.2"></circle>
<circle cx="703" cy="716" r="32" fill="#4a6a38" opacity="0.2"></circle>
<circle cx="584" cy="671" r="14" fill="#9cb878" opacity="0.2"></circle>
<circle cx="994" cy="923" r="20" fill="#56783e" opacity="0.2"></circle>
<circle cx="1021" cy="800" r="19" fill="#56783e" opacity="0.2"></circle>
<circle cx="1171" cy="809" r="29" fill="#56783e" opacity="0.2"></circle>
<circle cx="1529" cy="837" r="28" fill="#56783e" opacity="0.2"></circle>
<circle cx="402" cy="528" r="28" fill="#3e5a30" opacity="0.2"></circle>
<circle cx="1500" cy="509" r="16" fill="#4a6a38" opacity="0.2"></circle>
<circle cx="1809" cy="485" r="33" fill="#9cb878" opacity="0.2"></circle>
<circle cx="1806" cy="406" r="17" fill="#56783e" opacity="0.2"></circle>
<circle cx="904" cy="381" r="23" fill="#4a6a38" opacity="0.2"></circle>
<circle cx="1593" cy="515" r="26" fill="#c0d0a0" opacity="0.2"></circle>
<circle cx="188" cy="688" r="32" fill="#c0d0a0" opacity="0.2"></circle>
<circle cx="1425" cy="514" r="16" fill="#c0d0a0" opacity="0.2"></circle>
<circle cx="648" cy="821" r="33" fill="#b8cc90" opacity="0.2"></circle>
<circle cx="891" cy="766" r="14" fill="#56783e" opacity="0.2"></circle>
<circle cx="311" cy="920" r="30" fill="#56783e" opacity="0.2"></circle>
<circle cx="1168" cy="626" r="22" fill="#9cb878" opacity="0.2"></circle>
<circle cx="320" cy="581" r="12" fill="#c0d0a0" opacity="0.2"></circle>
<circle cx="1238" cy="560" r="33" fill="#b8cc90" opacity="0.2"></circle>
<circle cx="1865" cy="245" r="31" fill="#3e5a30" opacity="0.2"></circle>
<circle cx="498" cy="338" r="17" fill="#4a6a38" opacity="0.2"></circle>
<circle cx="636" cy="577" r="30" fill="#3e5a30" opacity="0.2"></circle>
<circle cx="1723" cy="396" r="22" fill="#4a6a38" opacity="0.2"></circle>
<circle cx="1546" cy="551" r="30" fill="#4a6a38" opacity="0.2"></circle>
<circle cx="980" cy="889" r="29" fill="#4a6a38" opacity="0.2"></circle>
<circle cx="37" cy="819" r="16" fill="#b8cc90" opacity="0.2"></circle>
<circle cx="1182" cy="174" r="13" fill="#c0d0a0" opacity="0.2"></circle>
<circle cx="994" cy="588" r="29" fill="#3e5a30" opacity="0.2"></circle>
<circle cx="1673" cy="114" r="16" fill="#3e5a30" opacity="0.2"></circle>
<circle cx="1466" cy="542" r="24" fill="#3e5a30" opacity="0.2"></circle>
<circle cx="854" cy="642" r="23" fill="#4a6a38" opacity="0.2"></circle>
<circle cx="401" cy="323" r="23" fill="#b8cc90" opacity="0.2"></circle>
<circle cx="974" cy="295" r="24" fill="#9cb878" opacity="0.2"></circle>
<circle cx="1746" cy="908" r="16" fill="#b8cc90" opacity="0.2"></circle>
<circle cx="852" cy="129" r="17" fill="#3e5a30" opacity="0.2"></circle>
<circle cx="426" cy="348" r="15" fill="#56783e" opacity="0.2"></circle>
<circle cx="1777" cy="671" r="20" fill="#9cb878" opacity="0.2"></circle>
<circle cx="1672" cy="979" r="17" fill="#3e5a30" opacity="0.2"></circle>
<circle cx="771" cy="523" r="34" fill="#56783e" opacity="0.2"></circle>
<circle cx="330" cy="470" r="23" fill="#9cb878" opacity="0.2"></circle>
<circle cx="814" cy="399" r="14" fill="#9cb878" opacity="0.2"></circle>
<circle cx="66" cy="586" r="22" fill="#3e5a30" opacity="0.2"></circle>
<circle cx="745" cy="552" r="18" fill="#3e5a30" opacity="0.2"></circle>
<circle cx="240" cy="933" r="17" fill="#3e5a30" opacity="0.2"></circle>
<circle cx="186" cy="318" r="32" fill="#56783e" opacity="0.2"></circle>
<circle cx="533" cy="183" r="21" fill="#c0d0a0" opacity="0.2"></circle>
<circle cx="1553" cy="306" r="15" fill="#4a6a38" opacity="0.2"></circle>
<circle cx="1091" cy="725" r="14" fill="#3e5a30" opacity="0.2"></circle>
<circle cx="1517" cy="234" r="32" fill="#9cb878" opacity="0.2"></circle>
<circle cx="1775" cy="663" r="30" fill="#3e5a30" opacity="0.2"></circle>
<circle cx="1161" cy="271" r="18" fill="#3e5a30" opacity="0.2"></circle>
<circle cx="874" cy="382" r="24" fill="#9cb878" opacity="0.2"></circle>
<circle cx="1186" cy="101" r="28" fill="#3e5a30" opacity="0.2"></circle>
<circle cx="1833" cy="309" r="16" fill="#9cb878" opacity="0.2"></circle>
<circle cx="1199" cy="565" r="17" fill="#b8cc90" opacity="0.2"></circle>
<circle cx="960" cy="229" r="20" fill="#3e5a30" opacity="0.2"></circle>
<circle cx="1880" cy="95" r="12" fill="#4a6a38" opacity="0.2"></circle>
<circle cx="1055" cy="240" r="22" fill="#b8cc90" opacity="0.2"></circle>
<circle cx="228" cy="838" r="22" fill="#b8cc90" opacity="0.2"></circle>
<circle cx="1045" cy="904" r="33" fill="#9cb878" opacity="0.2"></circle>
<circle cx="1309" cy="993" r="20" fill="#c0d0a0" opacity="0.2"></circle>
<circle cx="1386" cy="193" r="34" fill="#3e5a30" opacity="0.2"></circle>
<circle cx="1587" cy="74" r="26" fill="#9cb878" opacity="0.2"></circle>
<circle cx="831" cy="113" r="27" fill="#b8cc90" opacity="0.2"></circle>
<circle cx="1649" cy="697" r="18" fill="#56783e" opacity="0.2"></circle>
<circle cx="1318" cy="103" r="16" fill="#9cb878" opacity="0.2"></circle>
<circle cx="859" cy="310" r="33" fill="#4a6a38" opacity="0.2"></circle>
<circle cx="1671" cy="267" r="16" fill="#9cb878" opacity="0.2"></circle>
<circle cx="740" cy="511" r="23" fill="#56783e" opacity="0.2"></circle>
<circle cx="492" cy="797" r="14" fill="#3e5a30" opacity="0.2"></circle>
<circle cx="298" cy="617" r="21" fill="#9cb878" opacity="0.2"></circle>
<circle cx="596" cy="281" r="25" fill="#4a6a38" opacity="0.2"></circle>
<circle cx="1617" cy="207" r="32" fill="#4a6a38" opacity="0.2"></circle>
<circle cx="755" cy="370" r="34" fill="#56783e" opacity="0.2"></circle>
<circle cx="559" cy="648" r="15" fill="#c0d0a0" opacity="0.2"></circle>
<circle cx="1689" cy="656" r="28" fill="#4a6a38" opacity="0.2"></circle>
<circle cx="289" cy="558" r="23" fill="#3e5a30" opacity="0.2"></circle>
<circle cx="1567" cy="615" r="32" fill="#c0d0a0" opacity="0.2"></circle>
<circle cx="1808" cy="671" r="14" fill="#3e5a30" opacity="0.2"></circle>
<circle cx="278" cy="403" r="14" fill="#b8cc90" opacity="0.2"></circle>
<circle cx="1069" cy="656" r="26" fill="#c0d0a0" opacity="0.2"></circle>
<circle cx="485" cy="311" r="22" fill="#3e5a30" opacity="0.2"></circle>
<circle cx="1422" cy="538" r="24" fill="#c0d0a0" opacity="0.2"></circle>
<circle cx="1008" cy="768" r="22" fill="#3e5a30" opacity="0.2"></circle>
<circle cx="1604" cy="283" r="29" fill="#56783e" opacity="0.2"></circle>
<circle cx="1406" cy="987" r="23" fill="#b8cc90" opacity="0.2"></circle>
<circle cx="173" cy="925" r="18" fill="#3e5a30" opacity="0.2"></circle>
<circle cx="1178" cy="671" r="14" fill="#56783e" opacity="0.2"></circle>
<circle cx="647" cy="679" r="27" fill="#4a6a38" opacity="0.2"></circle>
<circle cx="1086" cy="72" r="13" fill="#9cb878" opacity="0.2"></circle>
<circle cx="1839" cy="155" r="17" fill="#b8cc90" opacity="0.2"></circle>
<circle cx="571" cy="551" r="22" fill="#b8cc90" opacity="0.2"></circle>
<circle cx="1457" cy="1004" r="24" fill="#9cb878" opacity="0.2"></circle>
<circle cx="1849" cy="949" r="12" fill="#b8cc90" opacity="0.2"></circle>
<circle cx="172" cy="541" r="34" fill="#9cb878" opacity="0.2"></circle>
<circle cx="750" cy="931" r="32" fill="#3e5a30" opacity="0.2"></circle>
<circle cx="1112" cy="195" r="24" fill="#9cb878" opacity="0.2"></circle>
<circle cx="277" cy="839" r="23" fill="#3e5a30" opacity="0.2"></circle>
<circle cx="1338" cy="280" r="32" fill="#b8cc90" opacity="0.2"></circle>
<circle cx="763" cy="211" r="33" fill="#c0d0a0" opacity="0.2"></circle>
<circle cx="868" cy="347" r="15" fill="#9cb878" opacity="0.2"></circle>
<circle cx="730" cy="175" r="19" fill="#9cb878" opacity="0.2"></circle>
<circle cx="1426" cy="857" r="15" fill="#56783e" opacity="0.2"></circle>
<circle cx="1356" cy="916" r="18" fill="#9cb878" opacity="0.2"></circle>
<circle cx="151" cy="431" r="31" fill="#3e5a30" opacity="0.2"></circle>
<circle cx="701" cy="467" r="18" fill="#3e5a30" opacity="0.2"></circle>
<circle cx="1261" cy="663" r="15" fill="#9cb878" opacity="0.2"></circle>
<circle cx="841" cy="360" r="29" fill="#b8cc90" opacity="0.2"></circle>
<circle cx="1675" cy="831" r="26" fill="#4a6a38" opacity="0.2"></circle>
<circle cx="1052" cy="744" r="13" fill="#c0d0a0" opacity="0.2"></circle>
<circle cx="794" cy="644" r="15" fill="#9cb878" opacity="0.2"></circle>
<circle cx="933" cy="926" r="24" fill="#56783e" opacity="0.2"></circle>
<circle cx="908" cy="386" r="19" fill="#c0d0a0" opacity="0.2"></circle>
<circle cx="1404" cy="680" r="21" fill="#56783e" opacity="0.2"></circle>
<circle cx="590" cy="589" r="21" fill="#56783e" opacity="0.2"></circle>
<circle cx="1226" cy="131" r="23" fill="#b8cc90" opacity="0.2"></circle>
<circle cx="1054" cy="490" r="19" fill="#b8cc90" opacity="0.2"></circle>
<circle cx="825" cy="580" r="17" fill="#56783e" opacity="0.2"></circle>
<circle cx="666" cy="147" r="17" fill="#9cb878" opacity="0.2"></circle>
<circle cx="1535" cy="252" r="12" fill="#b8cc90" opacity="0.2"></circle>
<circle cx="742" cy="769" r="17" fill="#9cb878" opacity="0.2"></circle>
<circle cx="659" cy="119" r="18" fill="#9cb878" opacity="0.2"></circle>
<circle cx="264" cy="538" r="26" fill="#56783e" opacity="0.2"></circle>
<circle cx="202" cy="912" r="20" fill="#c0d0a0" opacity="0.2"></circle>
<circle cx="859" cy="966" r="31" fill="#3e5a30" opacity="0.2"></circle>
<circle cx="267" cy="464" r="29" fill="#b8cc90" opacity="0.2"></circle>
<circle cx="1831" cy="525" r="14" fill="#4a6a38" opacity="0.2"></circle>
<circle cx="1621" cy="984" r="17" fill="#3e5a30" opacity="0.2"></circle>
<circle cx="446" cy="204" r="33" fill="#3e5a30" opacity="0.2"></circle>
<circle cx="1781" cy="746" r="26" fill="#b8cc90" opacity="0.2"></circle>
<circle cx="188" cy="798" r="12" fill="#56783e" opacity="0.2"></circle>
<circle cx="463" cy="934" r="26" fill="#9cb878" opacity="0.2"></circle>
<circle cx="1820" cy="655" r="24" fill="#b8cc90" opacity="0.2"></circle>
<circle cx="1329" cy="167" r="14" fill="#4a6a38" opacity="0.2"></circle>
<circle cx="1785" cy="242" r="18" fill="#4a6a38" opacity="0.2"></circle>
<circle cx="32" cy="571" r="34" fill="#9cb878" opacity="0.2"></circle>
<circle cx="1814" cy="672" r="31" fill="#b8cc90" opacity="0.2"></circle>
<circle cx="1009" cy="580" r="13" fill="#b8cc90" opacity="0.2"></circle>
<circle cx="1341" cy="352" r="12" fill="#b8cc90" opacity="0.2"></circle>
<circle cx="1676" cy="675" r="14" fill="#56783e" opacity="0.2"></circle>
<circle cx="1271" cy="939" r="17" fill="#3e5a30" opacity="0.2"></circle>
<circle cx="1324" cy="742" r="20" fill="#b8cc90" opacity="0.2"></circle>
<circle cx="398" cy="817" r="28" fill="#4a6a38" opacity="0.2"></circle>
<circle cx="155" cy="531" r="16" fill="#56783e" opacity="0.2"></circle>
<circle cx="459" cy="270" r="29" fill="#9cb878" opacity="0.2"></circle>
<circle cx="233" cy="652" r="25" fill="#56783e" opacity="0.2"></circle>
<circle cx="932" cy="925" r="13" fill="#4a6a38" opacity="0.2"></circle>
<circle cx="302" cy="434" r="17" fill="#4a6a38" opacity="0.2"></circle>
<circle cx="142" cy="434" r="32" fill="#9cb878" opacity="0.2"></circle>
<circle cx="1393" cy="1008" r="32" fill="#9cb878" opacity="0.2"></circle>
<circle cx="385" cy="680" r="24" fill="#b8cc90" opacity="0.2"></circle>
<circle cx="89" cy="691" r="20" fill="#9cb878" opacity="0.2"></circle>
<circle cx="1862" cy="480" r="14" fill="#3e5a30" opacity="0.2"></circle>
<circle cx="550" cy="394" r="33" fill="#3e5a30" opacity="0.2"></circle>
<circle cx="1074" cy="781" r="20" fill="#9cb878" opacity="0.2"></circle>
<circle cx="1559" cy="471" r="13" fill="#b8cc90" opacity="0.2"></circle>
<circle cx="394" cy="574" r="22" fill="#9cb878" opacity="0.2"></circle>
<circle cx="708" cy="912" r="13" fill="#b8cc90" opacity="0.2"></circle>
<circle cx="491" cy="654" r="21" fill="#b8cc90" opacity="0.2"></circle>
<circle cx="1741" cy="304" r="28" fill="#4a6a38" opacity="0.2"></circle>
<circle cx="661" cy="319" r="33" fill="#4a6a38" opacity="0.2"></circle>
<circle cx="111" cy="769" r="27" fill="#9cb878" opacity="0.2"></circle>
<circle cx="583" cy="745" r="25" fill="#c0d0a0" opacity="0.2"></circle>
<circle cx="1790" cy="122" r="30" fill="#3e5a30" opacity="0.2"></circle>
<circle cx="914" cy="969" r="33" fill="#b8cc90" opacity="0.2"></circle>
<circle cx="1499" cy="928" r="30" fill="#56783e" opacity="0.2"></circle>
<circle cx="1756" cy="234" r="30" fill="#c0d0a0" opacity="0.2"></circle>
<circle cx="594" cy="718" r="15" fill="#56783e" opacity="0.2"></circle>
<circle cx="640" cy="364" r="20" fill="#4a6a38" opacity="0.2"></circle>
<circle cx="1430" cy="295" r="13" fill="#3e5a30" opacity="0.2"></circle>
<circle cx="926" cy="577" r="16" fill="#b8cc90" opacity="0.2"></circle>
<circle cx="1673" cy="998" r="18" fill="#3e5a30" opacity="0.2"></circle>
<circle cx="418" cy="460" r="34" fill="#b8cc90" opacity="0.2"></circle>
<circle cx="887" cy="907" r="17" fill="#4a6a38" opacity="0.2"></circle>
<circle cx="1605" cy="691" r="15" fill="#9cb878" opacity="0.2"></circle>
<circle cx="576" cy="599" r="20" fill="#c0d0a0" opacity="0.2"></circle>
<circle cx="514" cy="477" r="16" fill="#56783e" opacity="0.2"></circle>
<circle cx="315" cy="900" r="25" fill="#9cb878" opacity="0.2"></circle>
<circle cx="151" cy="299" r="17" fill="#4a6a38" opacity="0.2"></circle>
<circle cx="460" cy="828" r="26" fill="#3e5a30" opacity="0.2"></circle>
<circle cx="220" cy="511" r="30" fill="#b8cc90" opacity="0.2"></circle>
<circle cx="1731" cy="98" r="18" fill="#3e5a30" opacity="0.2"></circle>
<circle cx="124" cy="630" r="30" fill="#56783e" opacity="0.2"></circle>
<circle cx="1760" cy="414" r="31" fill="#b8cc90" opacity="0.2"></circle>
<circle cx="1152" cy="796" r="27" fill="#3e5a30" opacity="0.2"></circle>
<circle cx="227" cy="626" r="26" fill="#56783e" opacity="0.2"></circle>
<circle cx="100" cy="383" r="13" fill="#9cb878" opacity="0.2"></circle>
<circle cx="101" cy="756" r="32" fill="#3e5a30" opacity="0.2"></circle>
<circle cx="1553" cy="449" r="20" fill="#4a6a38" opacity="0.2"></circle>
<circle cx="611" cy="253" r="29" fill="#4a6a38" opacity="0.2"></circle>
<circle cx="929" cy="448" r="30" fill="#c0d0a0" opacity="0.2"></circle>
<circle cx="1053" cy="667" r="14" fill="#56783e" opacity="0.2"></circle>
<circle cx="770" cy="318" r="34" fill="#c0d0a0" opacity="0.2"></circle>
<circle cx="602" cy="966" r="19" fill="#4a6a38" opacity="0.2"></circle>
<circle cx="1674" cy="453" r="12" fill="#9cb878" opacity="0.2"></circle>
<circle cx="1229" cy="431" r="21" fill="#3e5a30" opacity="0.2"></circle>
<circle cx="838" cy="209" r="14" fill="#3e5a30" opacity="0.2"></circle>
<circle cx="786" cy="899" r="22" fill="#56783e" opacity="0.2"></circle>
<circle cx="295" cy="826" r="21" fill="#4a6a38" opacity="0.2"></circle>
<circle cx="1187" cy="412" r="23" fill="#56783e" opacity="0.2"></circle>
<circle cx="677" cy="214" r="16" fill="#3e5a30" opacity="0.2"></circle>
<circle cx="232" cy="526" r="30" fill="#56783e" opacity="0.2"></circle>
<circle cx="591" cy="855" r="13" fill="#b8cc90" opacity="0.2"></circle>
<circle cx="615" cy="637" r="26" fill="#3e5a30" opacity="0.2"></circle>
<circle cx="1712" cy="649" r="30" fill="#56783e" opacity="0.2"></circle>
</g>
<path d="M380 400 L520 480" stroke="#e8ecf4" stroke-width="4" opacity=".6"></path>
<path d="M430 382 L570 462" stroke="#e8ecf4" stroke-width="4" opacity=".6"></path>
<path d="M480 364 L620 444" stroke="#e8ecf4" stroke-width="4" opacity=".6"></path>
<path d="M530 346 L670 426" stroke="#e8ecf4" stroke-width="4" opacity=".6"></path>
<path d="M580 328 L720 408" stroke="#e8ecf4" stroke-width="4" opacity=".6"></path>
</g>
</svg>
<div class="a" style="left:622px;top:297px;width:46px;height:8px;background:rgba(255,255,255,.6)"></div><div class="t" style="left:623px;top:298px;font-size:6.5px;font-weight:bold;color:#111;letter-spacing:-0.3px">BE2021 - TIANJIN2020</div><div class="a" style="left:596px;top:307px;width:71px;height:6px;background:#4a78c0;opacity:.85"></div><div class="a" style="left:609px;top:315px;width:58px;height:6px;background:#4a78c0;opacity:.85"></div>
<!-- pavilion -->
<svg style="left:637px;top:323px" width="310" height="210" viewBox="0 0 1594 1080" preserveAspectRatio="none">
<defs><filter id="blp" x="-2%" y="-2%" width="104%" height="104%"><feGaussianBlur stdDeviation="4"></feGaussianBlur></filter></defs><g filter="url(#blp)">
<path d="M80 620 L285 728 L500 650 L510 850 L860 1020 L1490 630 L1492 650 L860 1045 L508 870 L500 672 L285 750 L80 640Z" fill="#f0e2a8"></path>
<path d="M45 375 L860 680 L1510 345 L1490 640 L860 1030 L510 860 L500 660 L285 740 L80 630Z" fill="#dadadf"></path>
<path d="M285 470 L500 550 L500 660 L285 740Z" fill="#c8c4c4"></path>
<path d="M330 520 L480 570 L480 650 L340 700Z" fill="#f2eeea"></path>
<path d="M1060 640 L1300 510 L1300 700 L1060 850Z" fill="#c8c8cc"></path>
<path d="M1080 650 L1170 600 L1170 820 L1080 870Z" fill="#ebe8e6"></path>
<path d="M1200 590 L1290 540 L1290 700 L1200 760Z" fill="#ebe8e6"></path>
<path d="M60 388.61 L66 619.4" stroke="#9a9aa4" stroke-width="4"></path>
<path d="M88 399.082 L94 634.24" stroke="#9a9aa4" stroke-width="4"></path>
<path d="M116 409.554 L122 649.08" stroke="#9a9aa4" stroke-width="4"></path>
<path d="M144 420.026 L150 663.92" stroke="#9a9aa4" stroke-width="4"></path>
<path d="M172 430.498 L178 678.76" stroke="#9a9aa4" stroke-width="4"></path>
<path d="M200 440.97 L206 693.6" stroke="#9a9aa4" stroke-width="4"></path>
<path d="M228 451.442 L234 708.44" stroke="#9a9aa4" stroke-width="4"></path>
<path d="M256 461.914 L262 723.28" stroke="#9a9aa4" stroke-width="4"></path>
<path d="M284 472.38599999999997 L290 738.12" stroke="#9a9aa4" stroke-width="4"></path>
<path d="M312 482.858 L318 730.01" stroke="#9a9aa4" stroke-width="4"></path>
<path d="M340 493.33 L346 719.65" stroke="#9a9aa4" stroke-width="4"></path>
<path d="M368 503.802 L374 709.29" stroke="#9a9aa4" stroke-width="4"></path>
<path d="M396 514.274 L402 698.93" stroke="#9a9aa4" stroke-width="4"></path>
<path d="M424 524.746 L430 688.57" stroke="#9a9aa4" stroke-width="4"></path>
<path d="M452 535.218 L458 678.21" stroke="#9a9aa4" stroke-width="4"></path>
<path d="M480 545.69 L486 667.85" stroke="#9a9aa4" stroke-width="4"></path>
<path d="M520 560.65 L520 864.86" stroke="#9a9aa4" stroke-width="4"></path>
<path d="M554 573.366 L554 881.384" stroke="#9a9aa4" stroke-width="4"></path>
<path d="M588 586.082 L588 897.908" stroke="#9a9aa4" stroke-width="4"></path>
<path d="M622 598.798 L622 914.432" stroke="#9a9aa4" stroke-width="4"></path>
<path d="M656 611.514 L656 930.956" stroke="#9a9aa4" stroke-width="4"></path>
<path d="M690 624.23 L690 947.48" stroke="#9a9aa4" stroke-width="4"></path>
<path d="M724 636.946 L724 964.004" stroke="#9a9aa4" stroke-width="4"></path>
<path d="M758 649.662 L758 980.528" stroke="#9a9aa4" stroke-width="4"></path>
<path d="M792 662.3779999999999 L792 997.052" stroke="#9a9aa4" stroke-width="4"></path>
<path d="M826 675.094 L826 1013.576" stroke="#9a9aa4" stroke-width="4"></path>
<path d="M880 677.7 L880 1017.62" stroke="#9a9aa4" stroke-width="4"></path>
<path d="M916 659.16 L916 995.336" stroke="#9a9aa4" stroke-width="4"></path>
<path d="M952 640.62 L952 973.052" stroke="#9a9aa4" stroke-width="4"></path>
<path d="M988 622.08 L988 950.768" stroke="#9a9aa4" stroke-width="4"></path>
<path d="M1024 603.54 L1024 928.484" stroke="#9a9aa4" stroke-width="4"></path>
<path d="M1060 585.0 L1060 906.2" stroke="#9a9aa4" stroke-width="4"></path>
<path d="M1312 455.22 L1312 750.212" stroke="#9a9aa4" stroke-width="4"></path>
<path d="M1348 436.68 L1348 727.928" stroke="#9a9aa4" stroke-width="4"></path>
<path d="M1384 418.14 L1384 705.644" stroke="#9a9aa4" stroke-width="4"></path>
<path d="M1420 399.59999999999997 L1420 683.36" stroke="#9a9aa4" stroke-width="4"></path>
<path d="M1456 381.06 L1456 661.076" stroke="#9a9aa4" stroke-width="4"></path>
<path d="M1492 362.52 L1492 638.792" stroke="#9a9aa4" stroke-width="4"></path>
<path d="M150 424.27 L150 662.1" stroke="#45b2ea" stroke-width="22"></path>
<path d="M300 480.37 L300 729.45" stroke="#45b2ea" stroke-width="40"></path>
<path d="M660 615.01 L660 927.9" stroke="#45b2ea" stroke-width="26"></path>
<path d="M975 630.775 L975 953.815" stroke="#45b2ea" stroke-width="22"></path>
<path d="M1330 447.95 L1330 734.0699999999999" stroke="#45b2ea" stroke-width="18"></path>
<path d="M1460 381.0 L1460 653.6" stroke="#45b2ea" stroke-width="14"></path>
<path d="M50 376.87 L50 614.1" stroke="#d89848" stroke-width="14"></path>
<path d="M270 459.15 L270 730.7" stroke="#d89848" stroke-width="14"></path>
<path d="M410 511.51 L410 693.75" stroke="#d89848" stroke-width="14"></path>
<path d="M510 548.91 L510 860.0" stroke="#d89848" stroke-width="14"></path>
<path d="M850 676.0699999999999 L850 1025.24" stroke="#d89848" stroke-width="14"></path>
<path d="M1180 515.2 L1180 831.9200000000001" stroke="#d89848" stroke-width="14"></path>
<path d="M1290 458.54999999999995 L1290 763.8299999999999" stroke="#d89848" stroke-width="14"></path>
<path d="M1400 401.9 L1400 695.74" stroke="#d89848" stroke-width="14"></path>
<path d="M1500 350.4 L1500 633.84" stroke="#d89848" stroke-width="14"></path>
<path d="M45 375 L770 215 L780 300 L1040 360 L1230 290 L1510 345 L860 680Z" fill="#d4d4da"></path>
<path d="M181 426 L893 237" stroke="#a8a8b2" stroke-width="5"></path>
<path d="M317 477 L1017 258" stroke="#a8a8b2" stroke-width="5"></path>
<path d="M452 528 L1140 280" stroke="#a8a8b2" stroke-width="5"></path>
<path d="M588 578 L1263 302" stroke="#a8a8b2" stroke-width="5"></path>
<path d="M724 629 L1387 323" stroke="#a8a8b2" stroke-width="5"></path>
<path d="M480 395 L790 315 L1000 370 L700 470Z" fill="#d08a3a"></path>
<path d="M510 400 L790 335 L960 372 L700 450Z" fill="#e8e2da"></path>
<path d="M560 410 L790 350 L800 420 L640 445Z" fill="#c0b8b0"></path>
<path d="M40 372 L860 690 L1515 342" fill="none" stroke="#c87a30" stroke-width="26"></path>
<path d="M45 375 L770 215 M1230 290 L1510 345" fill="none" stroke="#d89850" stroke-width="10"></path>
<path d="M780 115 L1050 150 L1040 360 L790 300Z" fill="#d2d2d8"></path>
<path d="M1050 150 L1240 95 L1225 305 L1040 360Z" fill="#dcdce2"></path>
<path d="M830 150 L1000 172 L995 260 L835 245Z" fill="#f0ece6"></path>
<path d="M830 150 L1000 172 L995 260 L835 245Z" fill="none" stroke="#c87a30" stroke-width="12"></path>
<path d="M810 120 L815 295 M1020 150 L1015 350 M1120 130 L1112 335 M1200 110 L1190 315" stroke="#45b2ea" stroke-width="22"></path>
<path d="M1160 125 L1150 320" stroke="#d89848" stroke-width="14"></path>
<path d="M775 85 L1240 75 L1245 100 L1050 150 L780 118Z" fill="#c8c8ce"></path>
<path d="M775 88 L1050 150 L1245 98" fill="none" stroke="#d08a3a" stroke-width="12"></path>
<path d="M775 85 L1240 75" fill="none" stroke="#d8a050" stroke-width="8"></path>
<path d="M1045 150 L1040 360" stroke="#d08a3a" stroke-width="14"></path>
</g></svg>
<!-- Sapienza -->
<div class="t" style="left: 71px; top: 443px; font-size: 7.2px; font-family: &quot;Liberation Serif&quot;, serif; color: rgb(138, 48, 72); letter-spacing: -0.182px;">CENTRO DI RICERCA</div><div class="t" style="left: 71px; top: 453px; font-size: 7.2px; font-family: &quot;Liberation Serif&quot;, serif; color: rgb(138, 48, 72); letter-spacing: -0.281px;">INTERDIPARTIMENTALE TERRITORIO</div><div class="t" style="left: 71px; top: 463px; font-size: 7.2px; font-family: &quot;Liberation Serif&quot;, serif; color: rgb(138, 48, 72); letter-spacing: -0.236px;">EDILIZIA RESTAURO AMBIENTE CITERA</div>
<svg style="left:24px;top:481px" width="35" height="40" viewBox="0 0 35 40"><ellipse cx="17.5" cy="20" rx="17" ry="19.5" fill="#8c1c34"></ellipse><ellipse cx="17.5" cy="20" rx="13" ry="15.5" fill="none" stroke="#e0b0b8" stroke-width=".8"></ellipse><path d="M10 14 Q17 8 25 14 L23 26 Q17 30 12 26Z" fill="#d8a0ac" opacity=".7"></path></svg>
<div class="t" style="left: 71px; top: 485px; font-size: 18px; font-family: &quot;Liberation Serif&quot;, serif; color: rgb(140, 28, 52); letter-spacing: -0.031px;"><span style="font-size:22px">S</span>APIENZA</div>
<div class="t" style="left: 71px; top: 507px; font-size: 8.5px; font-family: &quot;Liberation Serif&quot;, serif; color: rgb(140, 28, 52); letter-spacing: -0.041px;">UNIVERSITÀ DI ROMA</div>
</div>


<!-- next slide thumb -->
<div class="a" style="left:1267px;top:298px;width:200px;height:112px;background:#fff;overflow:hidden">
  <div class="t" style="left:16px;top:7px;font-size:7px;font-weight:bold;color:#8a1a40">NZEB -&nbsp; Near Zero Energy Building</div>
  <div class="a" style="left:13px;top:21px;width:1.5px;height:1.5px;background:#2a3a8a"></div><div class="a" style="left:16px;top:20.5px;width:48px;height:2.2px;background:#3a4a9a;opacity:.75"></div><div class="a" style="left:68px;top:20.5px;width:5px;height:2.5px;background:#111;opacity:.8"></div><div class="a" style="left:76px;top:20.5px;width:64px;height:2.2px;background:#333;opacity:.6"></div><div class="a" style="left:13px;top:27.5px;width:1.5px;height:1.5px;background:#2a3a8a"></div><div class="a" style="left:16px;top:27.0px;width:48px;height:2.2px;background:#3a4a9a;opacity:.75"></div><div class="a" style="left:68px;top:27.0px;width:5px;height:2.5px;background:#111;opacity:.8"></div><div class="a" style="left:76px;top:27.0px;width:56px;height:2.2px;background:#333;opacity:.6"></div><div class="a" style="left:13px;top:33.5px;width:1.5px;height:1.5px;background:#2a3a8a"></div><div class="a" style="left:16px;top:33.0px;width:48px;height:2.2px;background:#3a4a9a;opacity:.75"></div><div class="a" style="left:68px;top:33.0px;width:5px;height:2.5px;background:#111;opacity:.8"></div><div class="a" style="left:76px;top:33.0px;width:60px;height:2.2px;background:#333;opacity:.6"></div><div class="a" style="left:13px;top:40px;width:1.5px;height:1.5px;background:#2a3a8a"></div><div class="a" style="left:16px;top:39.5px;width:52px;height:2.2px;background:#3a4a9a;opacity:.75"></div><div class="a" style="left:72px;top:39.5px;width:5px;height:2.5px;background:#111;opacity:.8"></div><div class="a" style="left:80px;top:39.5px;width:44px;height:2.2px;background:#333;opacity:.6"></div><div class="a" style="left:13px;top:46.5px;width:1.5px;height:1.5px;background:#2a3a8a"></div><div class="a" style="left:16px;top:46.0px;width:46px;height:2.2px;background:#3a4a9a;opacity:.75"></div><div class="a" style="left:66px;top:46.0px;width:5px;height:2.5px;background:#111;opacity:.8"></div><div class="a" style="left:74px;top:46.0px;width:58px;height:2.2px;background:#333;opacity:.6"></div><div class="a" style="left:13px;top:53.5px;width:1.5px;height:1.5px;background:#2a3a8a"></div><div class="a" style="left:16px;top:53.0px;width:32px;height:2.2px;background:#3a4a9a;opacity:.75"></div><div class="a" style="left:52px;top:53.0px;width:5px;height:2.5px;background:#111;opacity:.8"></div><div class="a" style="left:60px;top:53.0px;width:46px;height:2.2px;background:#333;opacity:.6"></div><div class="a" style="left:6px;top:67px;width:22px;height:7px;background:#e0a070;border-radius:3px;opacity:.7"></div>
  <div class="a" style="left:5px;top:76px;width:20px;height:9px;background:#3070c0;border-radius:3px;opacity:.8"></div>
  <div class="a" style="left:5px;top:100px;width:6px;height:6px;background:#8a1a40;border-radius:50%"></div>
  <svg style="left:36px;top:53px" width="78" height="58" viewBox="0 0 78 58"><path d="M8 22 L40 12 L70 20 V48 L40 56 L8 46Z" fill="#e8e8e8"></path><path d="M8 22 L40 12 V38 L8 46Z" fill="#b0b0b0"></path><path d="M40 38 L70 30 V48 L40 56Z" fill="#d8d8d8"></path><path d="M45 30 L70 25 L70 32 L45 37Z" fill="#4a6a3a"></path><rect x="22" y="5" width="14" height="6" fill="#3a5a8a" transform="skewX(-10)"></rect><rect x="16" y="30" width="18" height="12" fill="#3a3a3a" opacity=".7"></rect></svg>
  <svg style="left:113px;top:60px" width="79" height="49" viewBox="0 0 78 50"><defs><filter id="bln"><feGaussianBlur stdDeviation="0.8"></feGaussianBlur></filter></defs><g filter="url(#bln)"><rect width="78" height="50" fill="#4a6a8a"></rect><rect y="0" width="78" height="18" fill="#8ab0d0"></rect><path d="M0 0 H12 V35 H0Z" fill="#4a5a3a"></path><path d="M60 0 H78 V30 H60Z" fill="#3a4a2a"></path><path d="M8 30 L30 18 L62 20 L70 32 V38 H8Z" fill="#5a5a5a"></path><rect x="14" y="28" width="50" height="10" fill="#4a4040"></rect><rect y="38" width="78" height="12" fill="#6a8a4a"></rect></g></svg>
</div>
<div class="a" style="left:1267px;top:430px;width:200px;height:2px;background:#3a3a3c"></div>
<div class="t" style="left: 1267px; top: 453px; font-size: 24.5px; color: rgb(192, 192, 192); letter-spacing: -0.385px;">Nessuna nota.</div>

<!-- tools -->
<svg style="left:165px;top:849px" width="46" height="46" viewBox="0 0 46 46">
<path d="M37 3.5 Q41 4 42 7.5 Q42 9 41 10.5 L20 34 L13 27 L34 4.5Q35.5 3.3 37 3.5Z" fill="#a9a9a9"></path>
<path d="M12 28.5 L19 35.5 L12 40 L7 41 Q5 40 5.5 38 L7 35Z" fill="#a9a9a9"></path>
<path d="M4 40.5 L6.5 43 L3.5 44 Q2 44 2.2 42.5Z" fill="#a9a9a9"></path>
</svg>
<svg style="left:241px;top:849px" width="46" height="46" viewBox="0 0 46 46"><rect x="1.5" y="1" width="15" height="15" fill="#a9a9a9"></rect><rect x="20.5" y="1" width="15" height="11" fill="#a9a9a9"></rect><rect x="1.5" y="20" width="11" height="15" fill="#a9a9a9"></rect><rect x="17.5" y="13.5" width="27" height="30" fill="#1b1b1d"></rect><rect x="19.8" y="15.8" width="23" height="25.5" fill="none" stroke="#a9a9a9" stroke-width="4"></rect></svg>
<svg style="left:320px;top:849px" width="46" height="46" viewBox="0 0 46 46"><circle cx="19" cy="19.5" r="15.5" fill="none" stroke="#a9a9a9" stroke-width="3.8"></circle><path d="M30 31 L41 42" stroke="#a9a9a9" stroke-width="5" stroke-linecap="round"></path></svg>
<svg style="left:397px;top:849px" width="48" height="48" viewBox="0 0 48 48"><path d="M1.5 31 V1.5 H45" fill="none" stroke="#a9a9a9" stroke-width="2.4" stroke-dasharray="2.4 2.2"></path><path d="M1 32 L46 2" stroke="#a9a9a9" stroke-width="2.6"></path><path d="M42.5 8 V32 H16" fill="none" stroke="#a9a9a9" stroke-width="3"></path><rect x="20.5" y="32" width="6" height="11" fill="#a9a9a9"></rect><rect x="11" y="42" width="26" height="4" rx="1" fill="#a9a9a9"></rect></svg>
<svg style="left:475px;top:849px" width="47" height="47" viewBox="0 0 47 47"><circle cx="23.5" cy="23.5" r="21.5" fill="none" stroke="#a9a9a9" stroke-width="2.4"></circle><circle cx="14.5" cy="23.5" r="2.6" fill="#a9a9a9"></circle><circle cx="23.5" cy="23.5" r="2.6" fill="#a9a9a9"></circle><circle cx="32.5" cy="23.5" r="2.6" fill="#a9a9a9"></circle></svg>

<!-- nav (clipped) -->
<div class="a" style="left:440px;top:900px;width:400px;height:64px;overflow:hidden">
<svg style="left:21px;top:27px" width="58" height="58" viewBox="0 0 58 58"><circle cx="29" cy="29" r="27" fill="none" stroke="#a9a9a9" stroke-width="2.6"></circle><path d="M22 29 L35 20 V38Z" fill="#a9a9a9"></path></svg>
<div class="t" style="left: 106px; top: 43px; font-size: 23.5px; color: rgb(185, 185, 185); letter-spacing: -0.212px;">Diapositiva 4 di 18</div>
<svg style="left:322px;top:27px" width="58" height="58" viewBox="0 0 58 58"><circle cx="29" cy="29" r="27" fill="none" stroke="#a9a9a9" stroke-width="2.6"></circle><path d="M36 29 L23 20 V38Z" fill="#a9a9a9"></path></svg>
</div>

<!-- ============ ZOOM TOOLBAR ============ -->
<svg style="left:43px;top:971px" width="30" height="30" viewBox="0 0 30 30"><rect x="6" y="1" width="12" height="19" rx="6" fill="#a6a6a6"></rect><path d="M2.5 13 Q2.5 23 12 23 Q21.5 23 21.5 13" fill="none" stroke="#a6a6a6" stroke-width="2"></path><rect x="11" y="23" width="2" height="4.5" fill="#a6a6a6"></rect><rect x="7" y="27" width="10" height="2" rx="1" fill="#a6a6a6"></rect><path d="M1 29 L29.5 1" stroke="#e05555" stroke-width="2"></path></svg>
<svg style="left:92px;top:982px" width="11" height="7" viewBox="0 0 11 7"><path d="M1 6 L5.5 1.5 L10 6" fill="none" stroke="#c8c8c8" stroke-width="1.5"></path></svg>
<div class="tb" style="left: 25px; top: 1008px; letter-spacing: 0.503px;">Audio ein</div>
<svg style="left:159px;top:971px" width="32" height="30" viewBox="0 0 32 30"><rect x="1" y="6" width="22" height="18" rx="4" fill="#a6a6a6"></rect><path d="M23 12 L30.5 7.5 V22.5 L23 18Z" fill="#a6a6a6"></path><path d="M2 29 L30 1" stroke="#e05555" stroke-width="2"></path></svg>
<svg style="left:216px;top:982px" width="11" height="7" viewBox="0 0 11 7"><path d="M1 6 L5.5 1.5 L10 6" fill="none" stroke="#c8c8c8" stroke-width="1.5"></path></svg>
<div class="tb" style="left: 129px; top: 1008px; letter-spacing: 0.37px;">Video starten</div>

<svg style="left:557px;top:975px" width="32" height="23" viewBox="0 0 32 23"><circle cx="10" cy="5.5" r="5.5" fill="#a6a6a6"></circle><circle cx="22" cy="8" r="4.5" fill="#a6a6a6"></circle><path d="M0.5 17 Q0.5 11.5 10 11.5 Q19.5 11.5 19.5 17 Q19.5 22 10 22 Q0.5 22 0.5 17Z" fill="#a6a6a6"></path><path d="M20.5 14.5 Q31 13.5 31 18.5 Q31 22 20.5 22 Q22.5 18 20.5 14.5Z" fill="#a6a6a6"></path></svg>
<svg style="left:594px;top:977px" width="13" height="13" viewBox="0 0 13 13"><path d="M4 1.2 V12 M1 3.2 L4 1.2 M10 1.2 V12 M7 3.2 L10 1.2" fill="none" stroke="#c9c9c9" stroke-width="1.5"></path></svg>
<svg style="left:634px;top:982px" width="11" height="7" viewBox="0 0 11 7"><path d="M1 6 L5.5 1.5 L10 6" fill="none" stroke="#c8c8c8" stroke-width="1.5"></path></svg>
<div class="tb" style="left: 535px; top: 1008px; letter-spacing: 0.508px;">Teilnehmer</div>
<svg style="left:692px;top:974px" width="27" height="24" viewBox="0 0 27 24"><path d="M5 0.5 H21.5 Q26 0.5 26 5 V13 Q26 17.5 21.5 17.5 H12 L6.5 23 V17.5 H5 Q0.5 17.5 0.5 13 V5 Q0.5 0.5 5 0.5Z" fill="#a6a6a6"></path></svg>
<div class="tb" style="left: 689px; top: 1008px; letter-spacing: 0.09px;">Chat</div>
<svg style="left:819px;top:974px" width="32" height="24" viewBox="0 0 32 24"><rect x="0.5" y="0.5" width="30.5" height="22.5" rx="4" fill="#23d35a"></rect><path d="M15.75 17 V7 M11.5 11 L15.75 6.5 L20 11" fill="none" stroke="#111" stroke-width="2"></path></svg>
<div class="tb" style="left: 765px; top: 1008px; color: rgb(45, 205, 84); letter-spacing: 0.431px;">Bildschirm freigeben</div>
<svg style="left:954px;top:973px" width="28" height="28" viewBox="0 0 28 28"><circle cx="14" cy="13.5" r="12" fill="none" stroke="#a6a6a6" stroke-width="1.6"></circle><circle cx="14" cy="13.5" r="9.3" fill="#a6a6a6"></circle></svg>
<div class="tb" style="left: 926px; top: 1008px; letter-spacing: 0.381px;">Aufzeichnen</div>
<svg style="left:1058px;top:970px" width="30" height="29" viewBox="0 0 30 29"><circle cx="13" cy="17" r="11.5" fill="#a6a6a6"></circle><circle cx="9" cy="15" r="1.5" fill="#1b1b1d"></circle><circle cx="17" cy="15" r="1.5" fill="#1b1b1d"></circle><path d="M8 19.5 Q13 24 18 19.5" fill="none" stroke="#1b1b1d" stroke-width="1.6"></path><circle cx="23" cy="7" r="6" fill="#1b1b1d"></circle><path d="M23 2 V12 M18 7 H28" stroke="#c8c8c8" stroke-width="1.6"></path></svg>
<div class="tb" style="left: 1032px; top: 1008px; letter-spacing: 0.264px;">Reaktionen</div>
<div class="a" style="left:1410px;top:980px;width:95px;height:34px;background:#b92428;border-radius:8px"></div>
<div class="t" style="left: 1424px; top: 990px; font-size: 14.5px; font-weight: bold; color: rgb(255, 255, 255); letter-spacing: -0.304px;">Verlassen</div>

<!-- ============ RIGHT PANEL ============ -->
<svg style="left:1544px;top:54px" width="12" height="8" viewBox="0 0 12 8"><path d="M1 1.2 L6 6.2 L11 1.2" fill="none" stroke="#5d5d70" stroke-width="1.6"></path></svg>
<div class="t" style="left: 1660px; top: 50px; font-size: 16px; font-weight: bold; color: rgb(53, 53, 63); letter-spacing: 0.188px;">Teilnehmer (11)</div>
<div class="a" style="left:1544px;top:84px;width:355px;height:40px;border:1.5px solid #bcb9cf;border-radius:9px"></div>
<svg style="left:1558px;top:96px" width="17" height="17" viewBox="0 0 17 17"><circle cx="7" cy="7" r="5.8" fill="none" stroke="#6b6b7c" stroke-width="1.4"></circle><path d="M11.2 11.2 L15.5 15.5" stroke="#6b6b7c" stroke-width="1.5"></path></svg>
<div class="t" style="left: 1580px; top: 96px; font-size: 15px; color: rgb(138, 138, 154); letter-spacing: 0.117px;">Finden Sie einen Teilnehmer</div>
<svg style="left:1544px;top:133px" width="34" height="34" viewBox="0 0 34 34"><defs><clipPath id="av1"><rect width="34" height="34" rx="9"></rect></clipPath><filter id="avb1"><feGaussianBlur stdDeviation="0.6"></feGaussianBlur></filter></defs><g clip-path="url(#av1)"><g filter="url(#avb1)"><rect width="34" height="34" fill="#9a958c"></rect><path d="M0 0 H34 V10 L0 16Z" fill="#d0c8bc"></path><path d="M0 16 L34 10 V22 L0 26Z" fill="#4a5a52"></path><path d="M2 34 L5 20 Q10 14 17 14 Q26 15 32 22 L34 34Z" fill="#48484c"></path><path d="M14 16 L17 34 L20 34 L19 15Z" fill="#dde2ec"></path><path d="M16 17 L17.5 34 L19 34 L18 16Z" fill="#2c3d66"></path><ellipse cx="16" cy="9" rx="5" ry="6" fill="#a87462"></ellipse><path d="M11 8 Q11 2 16 2 Q21 2 21.5 7 Q18 4 13 7Z" fill="#241c1a"></path></g></g></svg>
<div class="pn" style="left: 1593px; top: 144px; letter-spacing: -0.294px;">Pablo Gándara (Ich)</div>
<svg style="left:1849px;top:142px" width="20" height="20" viewBox="0 0 20 20"><path d="M7.2 9.5 V4 Q7.2 1 10 1 Q12.8 1 12.8 4" fill="none" stroke="#e1262c" stroke-width="1.3"></path><path d="M4.3 9.5 Q4.3 12 5.5 13 M14.8 9 Q15 15.5 10 15.5 M12 11 Q11.5 12.5 10.5 13" fill="none" stroke="#e1262c" stroke-width="1.3"></path><path d="M10 15.5 V18.2 M7 18.6 H13" stroke="#e1262c" stroke-width="1.3"></path><path d="M0.6 19.4 L19.4 0.6" stroke="#e1262c" stroke-width="1.4"></path></svg>
<svg style="left:1879px;top:142px" width="20" height="20" viewBox="0 0 20 20"><path d="M12.5 4 H3 Q0.7 4 0.7 6.3 V12.5 Q0.7 14.8 3 14.8 H4 M7 14.8 H12.2 Q14.5 14.8 14.5 12.5 V10" fill="none" stroke="#e1262c" stroke-width="1.3"></path><path d="M14.5 8 L19.2 5 V14.6 L14.5 11.4" fill="none" stroke="#e1262c" stroke-width="1.3"></path><path d="M0.8 19.4 L19.6 0.6" stroke="#e1262c" stroke-width="1.4"></path></svg>
<svg style="left:1544px;top:184px" width="34" height="34" viewBox="0 0 34 34"><defs><clipPath id="av2"><rect width="34" height="34" rx="9"></rect></clipPath><filter id="avb2"><feGaussianBlur stdDeviation="0.35"></feGaussianBlur></filter></defs><g clip-path="url(#av2)"><g filter="url(#avb2)"><rect width="34" height="34" fill="#fff"></rect><path d="M3 10.5 V22 M3.5 13 L8.5 9.6" stroke="#1a4fa8" stroke-width="1.3" fill="none"></path><rect x="8.5" y="9.6" width="5" height="17.2" fill="#1a4fa8"></rect><circle cx="6.5" cy="15.5" r="1.2" fill="#f5e020"></circle><circle cx="5" cy="20.8" r="1.2" fill="#f5e020"></circle><circle cx="5" cy="23.8" r="1.2" fill="#f5e020"></circle><path d="M18.8 9.6 V20 Q18.8 25.5 24.8 25.5 Q30.8 25.5 30.8 20 V9.6" fill="none" stroke="#1a4fa8" stroke-width="4"></path><path d="M36 12 Q32.5 18 36 25" fill="none" stroke="#1a4fa8" stroke-width="2.5"></path><rect x="2.5" y="26.6" width="32" height="1.2" fill="#1a4fa8"></rect><rect x="3" y="29.6" width="32" height="1.4" fill="#5a7ac0" opacity=".7"></rect><rect x="10" y="32" width="25" height="1.2" fill="#6a8acc" opacity=".6"></rect></g></g></svg>
<div class="pn" style="left: 1593px; top: 195px; letter-spacing: -0.115px;">International Urban Co...</div>
<div class="t" style="left: 1773px; top: 195px; font-size: 15.5px; color: rgb(57, 57, 74); letter-spacing: -0.267px;">(Host)</div>
<svg style="left:1821px;top:195px" width="16" height="16" viewBox="0 0 16 16"><circle cx="8" cy="8" r="6.6" fill="none" stroke="#8a8a98" stroke-width="1.2"></circle><circle cx="8" cy="8" r="2.8" fill="#f03030"></circle></svg>
<svg style="left:1851px;top:193px" width="16" height="20" viewBox="0 0 16 20"><rect x="5.3" y="1" width="5.4" height="11" rx="2.7" fill="none" stroke="#6b6b7c" stroke-width="1.4"></rect><path d="M2.6 9 Q2.6 14.8 8 14.8 Q13.4 14.8 13.4 9" fill="none" stroke="#6b6b7c" stroke-width="1.4"></path><path d="M8 14.8 V18.2 M5 18.6 H11" stroke="#6b6b7c" stroke-width="1.4"></path></svg>
<svg style="left:1879px;top:196px" width="20" height="14" viewBox="0 0 20 14"><rect x="0.7" y="0.9" width="13.8" height="11.7" rx="2.3" fill="none" stroke="#6b6b7c" stroke-width="1.4"></rect><path d="M14.5 5.2 L19.2 2 V11.6 L14.5 8.4" fill="none" stroke="#6b6b7c" stroke-width="1.4" stroke-linejoin="round"></path></svg>
<svg style="left:1544px;top:235px" width="34" height="34" viewBox="0 0 34 34"><defs><clipPath id="av3"><rect width="34" height="34" rx="9"></rect></clipPath><filter id="avb3"><feGaussianBlur stdDeviation="0.6"></feGaussianBlur></filter></defs><g clip-path="url(#av3)"><g filter="url(#avb3)"><rect width="34" height="34" fill="#6a90c8"></rect><path d="M0 8 Q8 4 14 10 Q22 6 34 8 V20 H0Z" fill="#e8ecf0"></path><path d="M0 20 L5 17 L8 19 L12 16 L20 18 L26 15 L34 18 V34 H0Z" fill="#8a6a58"></path><path d="M0 26 H34 V34 H0Z" fill="#5a4a40"></path><rect x="26" y="22" width="6" height="12" fill="#2a3a2a"></rect></g></g></svg>
<div class="pn" style="left: 1593px; top: 246px; letter-spacing: -0.06px;">Patrick Maurelli</div>
<svg style="left:1819px;top:246px" width="20" height="16" viewBox="0 0 20 16"><rect x="0" y="0.5" width="20" height="15" rx="3" fill="#05a934"></rect><path d="M10 12.5 V4.5 M6.8 7.5 L10 4.2 L13.2 7.5" fill="none" stroke="#fff" stroke-width="1.8"></path></svg>
<svg style="left:1851px;top:244px" width="16" height="20" viewBox="0 0 16 20"><rect x="4.6" y="0.4" width="6.8" height="12" rx="3.4" fill="#6b6b7c"></rect><path d="M2.6 9 Q2.6 14.8 8 14.8 Q13.4 14.8 13.4 9" fill="none" stroke="#6b6b7c" stroke-width="1.4"></path><path d="M8 14.8 V18.2 M5 18.6 H11" stroke="#6b6b7c" stroke-width="1.4"></path></svg>
<svg style="left:1879px;top:247px" width="20" height="14" viewBox="0 0 20 14"><rect x="0.7" y="0.9" width="13.8" height="11.7" rx="2.3" fill="none" stroke="#6b6b7c" stroke-width="1.4"></rect><path d="M14.5 5.2 L19.2 2 V11.6 L14.5 8.4" fill="none" stroke="#6b6b7c" stroke-width="1.4" stroke-linejoin="round"></path></svg>
<svg style="left:1544px;top:286px" width="34" height="34" viewBox="0 0 34 34"><defs><clipPath id="av4"><rect width="34" height="34" rx="9"></rect></clipPath><filter id="avb4"><feGaussianBlur stdDeviation="0.6"></feGaussianBlur></filter></defs><g clip-path="url(#av4)"><g filter="url(#avb4)"><rect width="34" height="34" fill="#e8e6e2"></rect><path d="M0 0 L10 0 L4 10Z" fill="#d8d0a0"></path><ellipse cx="16" cy="15" rx="8" ry="10" fill="#b09080"></ellipse><path d="M8 12 Q8 4 16 4 Q24 4 24 11 Q20 7 14 8Z" fill="#3a3030"></path><path d="M10 20 Q16 26 22 20 L22 23 Q16 28 10 23Z" fill="#a8a098"></path><path d="M0 34 Q4 24 16 25 Q28 24 34 30 V34Z" fill="#dcd8d4"></path><ellipse cx="27" cy="20" rx="5" ry="7" fill="#c09a88"></ellipse></g></g></svg>
<div class="pn" style="left: 1593px; top: 297px; letter-spacing: -0.073px;">Giovanni Corsanego</div>
<svg style="left:1851px;top:295px" width="16" height="20" viewBox="0 0 16 20"><rect x="5.3" y="1" width="5.4" height="11" rx="2.7" fill="none" stroke="#6b6b7c" stroke-width="1.4"></rect><path d="M2.6 9 Q2.6 14.8 8 14.8 Q13.4 14.8 13.4 9" fill="none" stroke="#6b6b7c" stroke-width="1.4"></path><path d="M8 14.8 V18.2 M5 18.6 H11" stroke="#6b6b7c" stroke-width="1.4"></path></svg>
<svg style="left:1879px;top:298px" width="20" height="14" viewBox="0 0 20 14"><rect x="0.7" y="0.9" width="13.8" height="11.7" rx="2.3" fill="none" stroke="#6b6b7c" stroke-width="1.4"></rect><path d="M14.5 5.2 L19.2 2 V11.6 L14.5 8.4" fill="none" stroke="#6b6b7c" stroke-width="1.4" stroke-linejoin="round"></path></svg>
<svg style="left:1544px;top:337px" width="34" height="34" viewBox="0 0 34 34"><defs><clipPath id="av5"><rect width="34" height="34" rx="9"></rect></clipPath><filter id="avb5"><feGaussianBlur stdDeviation="0.6"></feGaussianBlur></filter></defs><g clip-path="url(#av5)"><g filter="url(#avb5)"><rect width="34" height="34" fill="#fff"></rect><rect y="0" width="34" height="10" fill="#6a7888"></rect><path d="M0 6 Q17 2 34 8 V12 H0Z" fill="#a8b0b8"></path><rect y="11" width="34" height="13" fill="#5a8038"></rect><path d="M0 20 L20 16 L34 22 V24 H0Z" fill="#3a5a28"></path><rect x="2" y="25" width="24" height="2.5" fill="#777"></rect><rect x="17" y="25" width="15" height="2.5" fill="#9ac070"></rect><rect x="4" y="29" width="26" height="1" fill="#aaa"></rect></g></g></svg>
<div class="pn" style="left: 1593px; top: 348px; letter-spacing: 0.044px;">dr. mario rossi</div>
<svg style="left:1851px;top:346px" width="16" height="20" viewBox="0 0 16 20"><rect x="5.3" y="1" width="5.4" height="11" rx="2.7" fill="none" stroke="#6b6b7c" stroke-width="1.4"></rect><path d="M2.6 9 Q2.6 14.8 8 14.8 Q13.4 14.8 13.4 9" fill="none" stroke="#6b6b7c" stroke-width="1.4"></path><path d="M8 14.8 V18.2 M5 18.6 H11" stroke="#6b6b7c" stroke-width="1.4"></path></svg>
<svg style="left:1879px;top:349px" width="20" height="14" viewBox="0 0 20 14"><rect x="0.7" y="0.9" width="13.8" height="11.7" rx="2.3" fill="none" stroke="#6b6b7c" stroke-width="1.4"></rect><path d="M14.5 5.2 L19.2 2 V11.6 L14.5 8.4" fill="none" stroke="#6b6b7c" stroke-width="1.4" stroke-linejoin="round"></path></svg>
<div class="a" style="left:1544px;top:388px;width:34px;height:34px;border-radius:9px;background:#d35400"></div>
<div class="t" style="left:1544px;top:398px;width:34px;text-align:center;font-size:15px;font-weight:bold;color:#fff;letter-spacing:-0.5px">FR</div>
<div class="pn" style="left: 1593px; top: 399px; letter-spacing: -0.44px;">Flavio Rosa</div>
<svg style="left:1851px;top:397px" width="16" height="20" viewBox="0 0 16 20"><rect x="5.3" y="1" width="5.4" height="11" rx="2.7" fill="none" stroke="#6b6b7c" stroke-width="1.4"></rect><path d="M2.6 9 Q2.6 14.8 8 14.8 Q13.4 14.8 13.4 9" fill="none" stroke="#6b6b7c" stroke-width="1.4"></path><path d="M8 14.8 V18.2 M5 18.6 H11" stroke="#6b6b7c" stroke-width="1.4"></path></svg>
<svg style="left:1879px;top:400px" width="20" height="14" viewBox="0 0 20 14"><rect x="0.7" y="0.9" width="13.8" height="11.7" rx="2.3" fill="none" stroke="#6b6b7c" stroke-width="1.4"></rect><path d="M14.5 5.2 L19.2 2 V11.6 L14.5 8.4" fill="none" stroke="#6b6b7c" stroke-width="1.4" stroke-linejoin="round"></path></svg>
<div class="a" style="left:1544px;top:439px;width:34px;height:34px;border-radius:9px;background:#8e44ad"></div>
<div class="t" style="left:1544px;top:449px;width:34px;text-align:center;font-size:16px;font-weight:bold;color:#fff;letter-spacing:-0.5px">G</div>
<div class="pn" style="left: 1593px; top: 450px; letter-spacing: -0.125px;">guo</div>
<svg style="left:1849px;top:448px" width="20" height="20" viewBox="0 0 20 20"><path d="M7.2 9.5 V4 Q7.2 1 10 1 Q12.8 1 12.8 4" fill="none" stroke="#e1262c" stroke-width="1.3"></path><path d="M4.3 9.5 Q4.3 12 5.5 13 M14.8 9 Q15 15.5 10 15.5 M12 11 Q11.5 12.5 10.5 13" fill="none" stroke="#e1262c" stroke-width="1.3"></path><path d="M10 15.5 V18.2 M7 18.6 H13" stroke="#e1262c" stroke-width="1.3"></path><path d="M0.6 19.4 L19.4 0.6" stroke="#e1262c" stroke-width="1.4"></path></svg>
<svg style="left:1879px;top:448px" width="20" height="20" viewBox="0 0 20 20"><path d="M12.5 4 H3 Q0.7 4 0.7 6.3 V12.5 Q0.7 14.8 3 14.8 H4 M7 14.8 H12.2 Q14.5 14.8 14.5 12.5 V10" fill="none" stroke="#e1262c" stroke-width="1.3"></path><path d="M14.5 8 L19.2 5 V14.6 L14.5 11.4" fill="none" stroke="#e1262c" stroke-width="1.3"></path><path d="M0.8 19.4 L19.6 0.6" stroke="#e1262c" stroke-width="1.4"></path></svg>
<div class="a" style="left:1544px;top:490px;width:34px;height:34px;border-radius:9px;background:#34495e"></div>
<div class="t" style="left:1544px;top:500px;width:34px;text-align:center;font-size:15px;font-weight:bold;color:#fff;letter-spacing:-0.5px">HM</div>
<div class="pn" style="left: 1593px; top: 501px; letter-spacing: -0.304px;">HUAWEI Mate 20</div>
<svg style="left:1849px;top:499px" width="20" height="20" viewBox="0 0 20 20"><path d="M7.2 9.5 V4 Q7.2 1 10 1 Q12.8 1 12.8 4" fill="none" stroke="#e1262c" stroke-width="1.3"></path><path d="M4.3 9.5 Q4.3 12 5.5 13 M14.8 9 Q15 15.5 10 15.5 M12 11 Q11.5 12.5 10.5 13" fill="none" stroke="#e1262c" stroke-width="1.3"></path><path d="M10 15.5 V18.2 M7 18.6 H13" stroke="#e1262c" stroke-width="1.3"></path><path d="M0.6 19.4 L19.4 0.6" stroke="#e1262c" stroke-width="1.4"></path></svg>
<svg style="left:1879px;top:502px" width="20" height="14" viewBox="0 0 20 14"><rect x="0.7" y="0.9" width="13.8" height="11.7" rx="2.3" fill="none" stroke="#6b6b7c" stroke-width="1.4"></rect><path d="M14.5 5.2 L19.2 2 V11.6 L14.5 8.4" fill="none" stroke="#6b6b7c" stroke-width="1.4" stroke-linejoin="round"></path></svg>
<div class="a" style="left:1544px;top:541px;width:34px;height:34px;border-radius:9px;background:#d35400"></div>
<div class="t" style="left:1544px;top:551px;width:34px;text-align:center;font-size:15px;font-weight:bold;color:#fff;letter-spacing:-0.5px">MJ</div>
<div class="pn" style="left: 1593px; top: 552px; letter-spacing: -0.149px;">Miao Jing</div>
<svg style="left:1849px;top:550px" width="20" height="20" viewBox="0 0 20 20"><path d="M7.2 9.5 V4 Q7.2 1 10 1 Q12.8 1 12.8 4" fill="none" stroke="#e1262c" stroke-width="1.3"></path><path d="M4.3 9.5 Q4.3 12 5.5 13 M14.8 9 Q15 15.5 10 15.5 M12 11 Q11.5 12.5 10.5 13" fill="none" stroke="#e1262c" stroke-width="1.3"></path><path d="M10 15.5 V18.2 M7 18.6 H13" stroke="#e1262c" stroke-width="1.3"></path><path d="M0.6 19.4 L19.4 0.6" stroke="#e1262c" stroke-width="1.4"></path></svg>
<svg style="left:1879px;top:553px" width="20" height="14" viewBox="0 0 20 14"><rect x="0.7" y="0.9" width="13.8" height="11.7" rx="2.3" fill="none" stroke="#6b6b7c" stroke-width="1.4"></rect><path d="M14.5 5.2 L19.2 2 V11.6 L14.5 8.4" fill="none" stroke="#6b6b7c" stroke-width="1.4" stroke-linejoin="round"></path></svg>
<svg style="left:1544px;top:592px" width="34" height="34" viewBox="0 0 34 34"><defs><clipPath id="av6"><rect width="34" height="34" rx="9"></rect></clipPath><filter id="avb6"><feGaussianBlur stdDeviation="0.6"></feGaussianBlur></filter></defs><g clip-path="url(#av6)"><g filter="url(#avb6)"><rect width="34" height="34" fill="#5a2418"></rect><path d="M8 0 L18 20 L28 0Z" fill="#3a1a14"></path><path d="M0 14 Q8 10 14 22 L10 34 H0Z" fill="#8a4a34"></path><path d="M20 22 Q26 12 34 16 V34 H22Z" fill="#9a5a40"></path><circle cx="7" cy="16" r="3.5" fill="#e0d0c0" opacity=".8"></circle><circle cx="28" cy="15" r="4" fill="#e8d8c8" opacity=".8"></circle><rect x="10" y="28" width="14" height="4" fill="#e0c8c0" opacity=".7"></rect></g></g></svg>
<div class="pn" style="left: 1593px; top: 603px; letter-spacing: -0.59px;">Yuan</div>
<svg style="left:1849px;top:601px" width="20" height="20" viewBox="0 0 20 20"><path d="M7.2 9.5 V4 Q7.2 1 10 1 Q12.8 1 12.8 4" fill="none" stroke="#e1262c" stroke-width="1.3"></path><path d="M4.3 9.5 Q4.3 12 5.5 13 M14.8 9 Q15 15.5 10 15.5 M12 11 Q11.5 12.5 10.5 13" fill="none" stroke="#e1262c" stroke-width="1.3"></path><path d="M10 15.5 V18.2 M7 18.6 H13" stroke="#e1262c" stroke-width="1.3"></path><path d="M0.6 19.4 L19.4 0.6" stroke="#e1262c" stroke-width="1.4"></path></svg>
<svg style="left:1879px;top:604px" width="20" height="14" viewBox="0 0 20 14"><rect x="0.7" y="0.9" width="13.8" height="11.7" rx="2.3" fill="none" stroke="#6b6b7c" stroke-width="1.4"></rect><path d="M14.5 5.2 L19.2 2 V11.6 L14.5 8.4" fill="none" stroke="#6b6b7c" stroke-width="1.4" stroke-linejoin="round"></path></svg>
<svg style="left:1544px;top:643px" width="34" height="34" viewBox="0 0 34 34"><defs><clipPath id="av7"><rect width="34" height="34" rx="9"></rect></clipPath><filter id="avb7"><feGaussianBlur stdDeviation="0.6"></feGaussianBlur></filter></defs><g clip-path="url(#av7)"><g filter="url(#avb7)"><rect width="34" height="34" fill="#7a7a70"></rect><rect x="0" y="0" width="6" height="34" fill="#4a4a40"></rect><rect x="26" y="0" width="8" height="34" fill="#9a9a90"></rect><path d="M0 34 Q4 22 17 22 Q30 22 34 34Z" fill="#e02828"></path><ellipse cx="17" cy="14" rx="6" ry="7.5" fill="#e0b8a0"></ellipse><path d="M10 13 Q10 5 17 5 Q24 5 24 13 L23 10 Q17 7 11 10Z" fill="#2a1a14"></path><rect x="12" y="28" width="10" height="3" fill="#f0c8b0"></rect></g></g></svg>
<div class="pn" style="left: 1593px; top: 654px; letter-spacing: -0.365px;">Cheon왕</div>
<svg style="left:1879px;top:652px" width="20" height="20" viewBox="0 0 20 20"><path d="M12.5 4 H3 Q0.7 4 0.7 6.3 V12.5 Q0.7 14.8 3 14.8 H4 M7 14.8 H12.2 Q14.5 14.8 14.5 12.5 V10" fill="none" stroke="#e1262c" stroke-width="1.3"></path><path d="M14.5 8 L19.2 5 V14.6 L14.5 11.4" fill="none" stroke="#e1262c" stroke-width="1.3"></path><path d="M0.8 19.4 L19.6 0.6" stroke="#e1262c" stroke-width="1.4"></path></svg>
<div class="a" style="left:1547px;top:983px;width:76px;height:29px;background:#f0eff5;border-radius:7px"></div>
<div class="pn" style="left: 1556.5px; top: 990px; font-size: 15px; color: rgb(53, 53, 74); letter-spacing: -0.299px;">Einladen</div>
<div class="a" style="left:1649px;top:983px;width:120px;height:29px;background:#f0eff5;border-radius:7px"></div>
<div class="pn" style="left: 1658.5px; top: 990px; font-size: 15px; color: rgb(53, 53, 74); letter-spacing: 0.15px;">Mein Audio ein</div>
<div class="a" style="left:1795px;top:983px;width:100px;height:29px;background:#f0eff5;border-radius:7px"></div>
<div class="pn" style="left: 1804.4px; top: 990px; font-size: 15px; color: rgb(53, 53, 74); letter-spacing: -0.115px;">Hand heben</div>
<!-- ============ TASKBAR ============ -->
<div class="a" style="left:0;top:1030px;width:1920px;height:50px;background:#0a2a46"></div>
<svg style="left:20px;top:1045px" width="21" height="21" viewBox="0 0 21 21"><path d="M0 2.9 L8.6 1.7 V9.9 H0Z M9.6 1.6 L21 0 V9.9 H9.6Z M0 10.9 H8.6 V19.2 L0 18Z M9.6 10.9 H21 V21 L9.6 19.4Z" fill="#fff"></path></svg>
<div class="a" style="left:60px;top:1030px;width:430px;height:50px;background:#f1f1f3;border-top:1px solid #c9c9cf"></div>
<svg style="left:75px;top:1045px" width="21" height="21" viewBox="0 0 21 21"><circle cx="12.5" cy="8.3" r="6.8" fill="none" stroke="#111" stroke-width="1.5"></circle><path d="M7.6 13.2 L1 19.8" stroke="#111" stroke-width="1.7"></path></svg>
<div class="t" style="left: 110px; top: 1047px; font-size: 18.5px; color: rgb(34, 34, 34); letter-spacing: 0.095px;">Zur Suche Text hier eingeben</div>
<svg style="left:509px;top:1044px" width="22" height="22" viewBox="0 0 22 22"><circle cx="11" cy="11" r="8.8" fill="none" stroke="#fff" stroke-width="2"></circle></svg>
<svg style="left:569px;top:1044px" width="24" height="22" viewBox="0 0 24 22"><path d="M1 1.5 H15 M1 20.5 H15" stroke="#fff" stroke-width="1.6"></path><rect x="1.8" y="5.5" width="12.4" height="11" fill="none" stroke="#fff" stroke-width="1.5"></rect><path d="M19 1 V5 M19 17 V21" stroke="#fff" stroke-width="1.5"></path><rect x="17.8" y="8" width="2.4" height="6" fill="#fff"></rect></svg>
<!-- outlook -->
<svg style="left:628px;top:1041px" width="30" height="28" viewBox="0 0 30 28"><rect x="9" y="1" width="20" height="11" fill="#28a8ea"></rect><rect x="19" y="1" width="10" height="6" fill="#50d9ff"></rect><path d="M9 12 H29 V27 H9Z" fill="#0a7dd4"></path><path d="M9 12 L19 20 L29 12 V27 H9Z" fill="#1490df"></path><rect x="0" y="7" width="16" height="15" rx="1.5" fill="#0a64c0"></rect><ellipse cx="8" cy="14.5" rx="3.8" ry="4.3" fill="none" stroke="#fff" stroke-width="2"></ellipse></svg>
<!-- explorer onedrive -->
<svg style="left:694px;top:1042px" width="26" height="28" viewBox="0 0 26 28"><path d="M1 2 L13 0 V24 L1 28Z" fill="#e8b840"></path><path d="M1 4 H13 V22 L1 26Z" fill="#f8d870"></path><path d="M10 26 Q8 20 14 19 Q16 14 21 16 Q26 16 25.5 21 Q26 26 22 26Z" fill="#1d6fd0"></path></svg>
<!-- nextcloud -->
<svg style="left:752px;top:1040px" width="30" height="30" viewBox="0 0 30 30"><circle cx="15" cy="15" r="14.5" fill="#0f7ac8"></circle><circle cx="15" cy="15" r="4" fill="none" stroke="#fff" stroke-width="2.2"></circle><circle cx="7" cy="15" r="2.4" fill="none" stroke="#fff" stroke-width="1.8"></circle><circle cx="23" cy="15" r="2.4" fill="none" stroke="#fff" stroke-width="1.8"></circle></svg>
<!-- chrome -->
<svg style="left:816px;top:1041px" width="28" height="28" viewBox="0 0 28 28"><circle cx="14" cy="14" r="13.5" fill="#db4437"></circle><path d="M14 14 L2.3 7.3 A13.5 13.5 0 0 0 14 27.5Z" fill="#0f9d58"></path><path d="M14 14 L14 27.5 A13.5 13.5 0 0 0 25.7 7.3Z" fill="#f4c20d"></path><path d="M14 14 L25.7 7.3 A13.5 13.5 0 0 0 2.3 7.3Z" fill="#db4437"></path><circle cx="14" cy="14" r="6.2" fill="#fff"></circle><circle cx="14" cy="14" r="4.8" fill="#4285f4"></circle></svg>
<!-- explorer -->
<svg style="left:877px;top:1043px" width="28" height="24" viewBox="0 0 28 24"><path d="M0 2 Q0 0 2 0 H10 L13 3 H26 Q28 3 28 5 V22 Q28 24 26 24 H2 Q0 24 0 22Z" fill="#f0b429"></path><rect x="0" y="6" width="28" height="18" rx="1.5" fill="#ffd666"></rect><rect x="8" y="15" width="12" height="9" fill="#2a88d8"></rect><rect x="11" y="18" width="6" height="6" fill="#ffd666"></rect></svg>
<!-- word -->
<svg style="left:939px;top:1041px" width="30" height="28" viewBox="0 0 30 28"><rect x="8" y="0" width="21" height="28" rx="1.5" fill="#41a5ee"></rect><rect x="8" y="7" width="21" height="7" fill="#2b7cd3"></rect><rect x="8" y="14" width="21" height="7" fill="#185abd"></rect><rect x="8" y="21" width="21" height="7" fill="#103f91"></rect><rect x="0" y="6" width="16" height="16" rx="1.5" fill="#185abd"></rect><path d="M3 10 L5 18 L8 12 L11 18 L13 10" fill="none" stroke="#fff" stroke-width="1.6"></path></svg>
<!-- pdf -->
<svg style="left:1001px;top:1040px" width="28" height="30" viewBox="0 0 28 30"><rect x="0.5" y="0.5" width="27" height="28" rx="1.5" fill="#e4e8f0" stroke="#c0c4cc" stroke-width=".8"></rect><rect x="3" y="1" width="2" height="8" fill="#d04ad0"></rect><rect x="6" y="1" width="2" height="8" fill="#40a0e0"></rect><rect x="9" y="1" width="2" height="8" fill="#f0d020"></rect><ellipse cx="12" cy="14" rx="9" ry="4" fill="none" stroke="#3070c0" stroke-width="1.4"></ellipse><circle cx="12" cy="14" r="2.5" fill="#3070c0"></circle><rect x="12" y="19" width="15" height="9" fill="#e8502a"></rect><text x="13.5" y="26.5" font-family="Liberation Sans" font-weight="bold" font-size="7" fill="#fff">PDF</text></svg>
<!-- whatsapp -->
<svg style="left:1063px;top:1040px" width="34" height="32" viewBox="0 0 34 32"><path d="M15 1 A13 13 0 1 1 8.5 25.5 L1 28 L3.5 21 A13 13 0 0 1 15 1Z" fill="#fff"></path><circle cx="15" cy="14" r="10.5" fill="#25d366"></circle><path d="M10.5 9 Q9 11 11 15 Q14 19.5 18 20.5 Q20 21 21 19 L19 17.5 L17.5 18.5 Q14.5 17 12.5 13.5 L13.5 12 L12 9.5Z" fill="#fff"></path><circle cx="24" cy="23" r="8.3" fill="#e81123"></circle><text x="24" y="28.3" font-family="Liberation Sans" font-size="14" fill="#fff" text-anchor="middle">2</text></svg>
<!-- wechat -->
<svg style="left:1124px;top:1042px" width="32" height="26" viewBox="0 0 32 26"><ellipse cx="12" cy="10" rx="11.5" ry="9.5" fill="#2dc100"></ellipse><path d="M5 16 L3 21 L9 18Z" fill="#2dc100"></path><circle cx="8" cy="8" r="1.4" fill="#0a2a46"></circle><circle cx="16" cy="8" r="1.4" fill="#0a2a46"></circle><ellipse cx="22" cy="17" rx="9.5" ry="7.5" fill="#f4f4f4"></ellipse><path d="M27 22 L29 26 L24 23.5Z" fill="#f4f4f4"></path><circle cx="19" cy="16" r="1.2" fill="#888"></circle><circle cx="25" cy="16" r="1.2" fill="#888"></circle></svg>
<!-- skype -->
<svg style="left:1188px;top:1041px" width="28" height="28" viewBox="0 0 28 28"><circle cx="8" cy="8" r="7.5" fill="#0a8ad8"></circle><circle cx="20" cy="20" r="7.5" fill="#0a8ad8"></circle><circle cx="14" cy="14" r="12" fill="#00a8e8"></circle><text x="14" y="21" font-family="Liberation Sans" font-weight="bold" font-size="19" fill="#fff" text-anchor="middle">S</text></svg>
<!-- powerpoint -->
<svg style="left:1248px;top:1041px" width="30" height="28" viewBox="0 0 30 28"><circle cx="16" cy="14" r="13.5" fill="#ed6c47"></circle><path d="M16 14 V0.5 A13.5 13.5 0 0 1 29.5 14Z" fill="#ff8f6b"></path><path d="M16 14 H29.5 A13.5 13.5 0 0 1 16 27.5Z" fill="#d35230"></path><rect x="0" y="6" width="15" height="16" rx="1.5" fill="#c43e1c"></rect><path d="M4.5 19 V9.5 H8 Q11 9.5 11 12.5 Q11 15.5 8 15.5 H4.5" fill="none" stroke="#fff" stroke-width="1.8"></path></svg>
<!-- paint -->
<svg style="left:1310px;top:1040px" width="32" height="30" viewBox="0 0 32 30"><path d="M2 18 Q0 8 10 6 Q22 4 24 12 Q25 17 20 17 Q16 17 17 21 Q18 26 10 26 Q3 25 2 18Z" fill="#d8e4f0"></path><circle cx="8" cy="13" r="2" fill="#e04040"></circle><circle cx="13" cy="10" r="2" fill="#40a040"></circle><circle cx="18" cy="10" r="2" fill="#f0c020"></circle><circle cx="7" cy="19" r="2" fill="#4070e0"></circle><path d="M14 26 L29 2" stroke="#d09030" stroke-width="3"></path><path d="M27 1 L31 0 L30 5Z" fill="#e0a040"></path></svg>
<!-- zoom active -->
<div class="a" style="left:1358px;top:1030px;width:61px;height:50px;background:#10426e"></div>
<svg style="left:1373px;top:1041px" width="29" height="29" viewBox="0 0 29 29"><rect width="29" height="29" rx="9" fill="#4c8dfd"></rect><rect x="6" y="9.5" width="12" height="10" rx="2" fill="#fff"></rect><path d="M18.5 13 L23.5 10 V19.5 L18.5 16.5Z" fill="#fff"></path></svg>
<!-- underlines -->
<div class="a" style="left:619px;top:1077px;width:51px;height:3px;background:#9ecbf0"></div>
<div class="a" style="left:805px;top:1077px;width:51px;height:3px;background:#9ecbf0"></div>
<div class="a" style="left:867px;top:1077px;width:51px;height:3px;background:#9ecbf0"></div>
<div class="a" style="left:991px;top:1077px;width:51px;height:3px;background:#9ecbf0"></div>
<div class="a" style="left:1053px;top:1077px;width:51px;height:3px;background:#9ecbf0"></div>
<div class="a" style="left:1115px;top:1077px;width:51px;height:3px;background:#9ecbf0"></div>
<div class="a" style="left:1177px;top:1077px;width:51px;height:3px;background:#9ecbf0"></div>
<div class="a" style="left:1239px;top:1077px;width:51px;height:3px;background:#9ecbf0"></div>
<div class="a" style="left:1290px;top:1077px;width:4px;height:3px;background:#6a8aa8"></div>
<div class="a" style="left:1301px;top:1077px;width:51px;height:3px;background:#9ecbf0"></div>
<div class="a" style="left:1358px;top:1077px;width:61px;height:3px;background:#9ecbf0"></div>
<!-- tray -->
<svg style="left:1579px;top:1049px" width="18" height="11" viewBox="0 0 18 11"><path d="M1 10 L9 2 L17 10" fill="none" stroke="#fff" stroke-width="1.4"></path></svg>
<svg style="left:1607px;top:1046px" width="22" height="20" viewBox="0 0 22 20"><path d="M2 15 Q0 10 5 9 Q6 3 12 4 Q18 3 18 10 Q21 11 20 15Z" fill="#b8c8d8"></path><circle cx="15" cy="15" r="4.6" fill="#6a6a6a" stroke="#0a2a46" stroke-width="1"></circle><path d="M13.8 12.8 V17.2 M16.2 12.8 V17.2" stroke="#fff" stroke-width="1"></path></svg>
<svg style="left:1637px;top:1047px" width="22" height="15" viewBox="0 0 22 15"><path d="M2 0 V3 M5 0 V3 M1 3 H6 V5 Q6 7 3.5 7 Q1 7 1 5Z" fill="none" stroke="#fff" stroke-width="1"></path><rect x="3.5" y="4.5" width="16" height="9" fill="none" stroke="#fff" stroke-width="1.2"></rect><rect x="5" y="6" width="13" height="6" fill="#fff"></rect><rect x="20" y="7" width="1.5" height="3.5" fill="#fff"></rect></svg>
<svg style="left:1670px;top:1047px" width="18" height="17" viewBox="0 0 18 17"><path d="M1 16 A15 15 0 0 1 16 1 M4.5 16 A11.5 11.5 0 0 1 16 4.5 M8 16 A8 8 0 0 1 16 8 M11.5 16 A4.5 4.5 0 0 1 16 11.5" fill="none" stroke="#fff" stroke-width="1.1"></path><circle cx="14.5" cy="14.5" r="1.5" fill="#fff"></circle></svg>
<svg style="left:1697px;top:1046px" width="22" height="17" viewBox="0 0 22 17"><path d="M1 5.5 H4 L8.5 1.5 V15.5 L4 11.5 H1Z" fill="none" stroke="#fff" stroke-width="1.1"></path><path d="M11.5 6 Q13 8.5 11.5 11 M14 4 Q17 8.5 14 13" fill="none" stroke="#fff" stroke-width="1.1"></path><path d="M17 2 Q21.5 8.5 17 15" fill="none" stroke="#6a7a8a" stroke-width="1.1"></path></svg>
<div class="t" style="left: 1731px; top: 1048px; font-size: 14px; color: rgb(255, 255, 255); letter-spacing: -0.521px;">DEU</div>
<div class="t" style="left: 1793px; top: 1036px; font-size: 14px; color: rgb(255, 255, 255); letter-spacing: -0.209px;">09:13</div>
<div class="t" style="left: 1776px; top: 1058px; font-size: 14px; color: rgb(255, 255, 255); letter-spacing: -0.108px;">23.07.2020</div>
<svg style="left:1868px;top:1044px" width="36" height="34" viewBox="0 0 36 34"><path d="M1 1 H21 V15 H8 L3 19 V15 H1Z" fill="#fff"></path><path d="M4 5 H18 M4 8 H18 M4 11 H14" stroke="#0a2a46" stroke-width="1"></path><circle cx="20" cy="21" r="10.5" fill="#0d3a66" stroke="#6a9ac8" stroke-width="1.2"></circle><text x="20" y="26.5" font-family="Liberation Sans" font-weight="bold" font-size="14" fill="#fff" text-anchor="middle">21</text></svg>
<div class="a" style="left:1914px;top:1030px;width:1px;height:50px;background:#4a6a88"></div>



</body></html>
